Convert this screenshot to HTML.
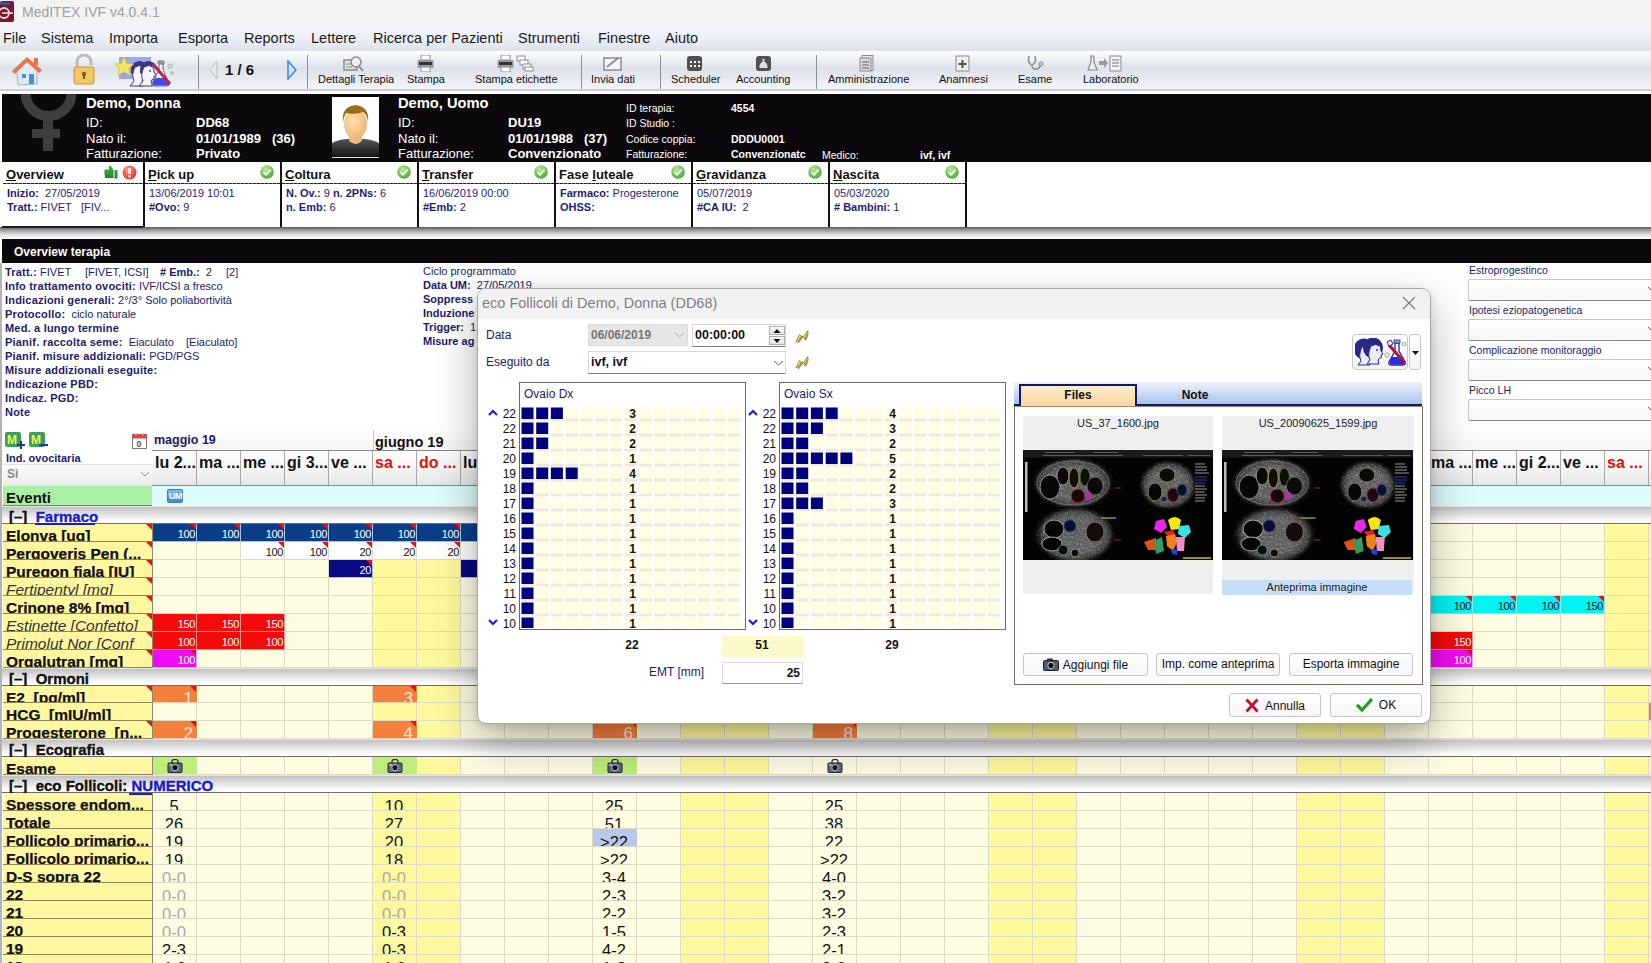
<!DOCTYPE html><html><head><meta charset="utf-8"><style>
html,body{margin:0;padding:0;width:1651px;height:963px;overflow:hidden;background:#fff;}
body{position:relative;font-family:"Liberation Sans",sans-serif;}
div{box-sizing:border-box;}
.t{position:absolute;white-space:nowrap;line-height:1;}
</style></head><body>
<div style="position:absolute;left:0px;top:0px;width:1651px;height:25px;background:#f3f3f3;"></div>
<svg style="position:absolute;left:0;top:1px" width="15" height="21" viewBox="0 0 15 21">
<path d="M0 2 Q0 0 2 0 L12 0 Q14 0 14 2 L14 19 Q14 21 12 21 L0 21 Z" fill="#7a1630"/>
<path d="M0 1 L10 1 L10 4 L0 4Z" fill="#3b5b9b" opacity=".8"/>
<circle cx="4" cy="12" r="5" fill="none" stroke="#f0d8dd" stroke-width="1.8"/>
<path d="M2 12 H13" stroke="#f0d8dd" stroke-width="1.6"/>
</svg>
<div style="position:absolute;left:22px;top:4px;white-space:nowrap;font-size:14px;color:#a0a0a0;line-height:17px;">MedITEX IVF v4.0.4.1</div>
<div style="position:absolute;left:0px;top:25px;width:1651px;height:26px;background:linear-gradient(#f5f7fb,#e9edf4 60%,#dde2ea);"></div>
<div style="position:absolute;left:3px;top:30px;white-space:nowrap;font-size:14.5px;color:#1b1b1b;line-height:17px;">File</div>
<div style="position:absolute;left:41px;top:30px;white-space:nowrap;font-size:14.5px;color:#1b1b1b;line-height:17px;">Sistema</div>
<div style="position:absolute;left:109px;top:30px;white-space:nowrap;font-size:14.5px;color:#1b1b1b;line-height:17px;">Importa</div>
<div style="position:absolute;left:178px;top:30px;white-space:nowrap;font-size:14.5px;color:#1b1b1b;line-height:17px;">Esporta</div>
<div style="position:absolute;left:244px;top:30px;white-space:nowrap;font-size:14.5px;color:#1b1b1b;line-height:17px;">Reports</div>
<div style="position:absolute;left:311px;top:30px;white-space:nowrap;font-size:14.5px;color:#1b1b1b;line-height:17px;">Lettere</div>
<div style="position:absolute;left:373px;top:30px;white-space:nowrap;font-size:14.5px;color:#1b1b1b;line-height:17px;">Ricerca per Pazienti</div>
<div style="position:absolute;left:518px;top:30px;white-space:nowrap;font-size:14.5px;color:#1b1b1b;line-height:17px;">Strumenti</div>
<div style="position:absolute;left:598px;top:30px;white-space:nowrap;font-size:14.5px;color:#1b1b1b;line-height:17px;">Finestre</div>
<div style="position:absolute;left:665px;top:30px;white-space:nowrap;font-size:14.5px;color:#1b1b1b;line-height:17px;">Aiuto</div>
<div style="position:absolute;left:0px;top:51px;width:1651px;height:40px;background:linear-gradient(#ffffff,#f4f6f9 12%,#dde2ea 45%,#e6e9ef 70%,#f3f5f8);border-bottom:2px solid #c9cdd5;"></div>
<div style="position:absolute;left:198px;top:55px;width:1px;height:34px;background:#8a8f98;"></div>
<div style="position:absolute;left:307px;top:55px;width:1px;height:34px;background:#8a8f98;"></div>
<div style="position:absolute;left:581px;top:55px;width:1px;height:34px;background:#8a8f98;"></div>
<div style="position:absolute;left:660px;top:55px;width:1px;height:34px;background:#8a8f98;"></div>
<div style="position:absolute;left:816px;top:55px;width:1px;height:34px;background:#8a8f98;"></div>
<svg style="position:absolute;left:10px;top:54px" width="34" height="34" viewBox="0 0 34 34">
<path d="M4 17 L17 5 L30 17 L27 17 L27 30 L8 31 L7 17Z" fill="#dfe9f5" stroke="#9fb4cc" stroke-width="1"/>
<path d="M2 17 L17 3 L32 16 L29 19 L17 8 L5 20Z" fill="#e8744a"/>
<rect x="24" y="4" width="4" height="7" fill="#e8744a"/>
<rect x="12" y="20" width="4" height="4" fill="#4c8fd6"/>
<rect x="19" y="20" width="5" height="10" fill="#4c8fd6"/>
</svg>
<svg style="position:absolute;left:73px;top:54px" width="22" height="31" viewBox="0 0 22 31">
<path d="M4 14 V8 A7 7 0 0 1 18 8 V11" fill="none" stroke="#bdbdbd" stroke-width="3"/>
<rect x="1" y="13" width="20" height="17" rx="2" fill="#f2c867" stroke="#c9953a"/>
<circle cx="11" cy="20" r="2.2" fill="#8a5a1a"/><rect x="10" y="20" width="2" height="5" fill="#8a5a1a"/>
</svg>
<svg style="position:absolute;left:114px;top:55px" width="60" height="32" viewBox="0 0 60 32">
<rect x="5" y="2" width="32" height="22" fill="#9ea8e0"/>
<g transform="translate(14,4) scale(1.0)"><path d="M3 14 Q2 3 11 2 Q18 2 18.5 9 Q14 5 8 8 Q5 10 5 15Z" fill="#3a3488"/>
<path d="M7 8 Q12 5 16 8 Q17 11 17 13 L19 16 L17 17 L17.5 19.5 L15 20.5 L14 22 L15.5 27 L2 27 L6 22 Q3 16 7 8Z" fill="#f4f4fa" stroke="#3a3488" stroke-width="1"/>
<circle cx="13" cy="12" r=".9" fill="#3a3488"/></g><g transform="translate(23,4) scale(1.0)"><path d="M3 14 Q2 3 11 2 Q18 2 18.5 9 Q14 5 8 8 Q5 10 5 15Z" fill="#3a3488"/>
<path d="M7 8 Q12 5 16 8 Q17 11 17 13 L19 16 L17 17 L17.5 19.5 L15 20.5 L14 22 L15.5 27 L2 27 L6 22 Q3 16 7 8Z" fill="#f4f4fa" stroke="#3a3488" stroke-width="1"/>
<circle cx="13" cy="12" r=".9" fill="#3a3488"/></g>
<path d="M10 2 L12.8 8.5 L19.8 9 L14.5 13.6 L16.2 20.5 L10 16.8 L3.8 20.5 L5.5 13.6 L0.2 9 L7.2 8.5Z" fill="#f2e660" stroke="#d8c038" stroke-width=".6"/>
<path d="M45 8 L45 15 L38 28 Q37 31 40 31 L53 31 Q56 31 55 28 L49 15 L49 8Z" fill="#fff" stroke="#5a5aa8" stroke-width="1"/>
<path d="M40 23 L52 23 L55 29 Q55 30.5 53 30.5 L40 30.5 Q38 30.5 38.5 29Z" fill="#4848e8"/>
<path d="M39 9 L56 29" stroke="#b82848" stroke-width="3.2"/>
<rect x="44" y="6" width="6" height="3" rx="1" fill="#aab" stroke="#667"/>
<circle cx="56" cy="11" r="2" fill="none" stroke="#8ab880" stroke-width=".9"/><circle cx="58" cy="18" r="1.3" fill="none" stroke="#8ab880" stroke-width=".9"/><circle cx="41" cy="22" r="1.6" fill="none" stroke="#8ab880" stroke-width=".9"/>
</svg>
<svg style="position:absolute;left:208px;top:60px" width="11" height="20" viewBox="0 0 11 20"><path d="M9 1 L2 10 L9 19 Z" fill="#e6e8ec" stroke="#b8bcc4"/></svg>
<div style="position:absolute;left:225px;top:62px;white-space:nowrap;font-size:15px;font-weight:bold;color:#111;line-height:16px;">1 / 6</div>
<svg style="position:absolute;left:286px;top:60px" width="12" height="20" viewBox="0 0 12 20"><path d="M2 1 L10 10 L2 19 Z" fill="#cfe3fb" stroke="#3d8ae0" stroke-width="1.5"/></svg>
<div style="position:absolute;left:318px;top:73px;white-space:nowrap;font-size:11px;color:#111;line-height:12px;">Dettagli Terapia</div>
<div style="position:absolute;left:407px;top:73px;white-space:nowrap;font-size:11px;color:#111;line-height:12px;">Stampa</div>
<div style="position:absolute;left:475px;top:73px;white-space:nowrap;font-size:11px;color:#111;line-height:12px;">Stampa etichette</div>
<div style="position:absolute;left:591px;top:73px;white-space:nowrap;font-size:11px;color:#111;line-height:12px;">Invia dati</div>
<div style="position:absolute;left:671px;top:73px;white-space:nowrap;font-size:11px;color:#111;line-height:12px;">Scheduler</div>
<div style="position:absolute;left:736px;top:73px;white-space:nowrap;font-size:11px;color:#111;line-height:12px;">Accounting</div>
<div style="position:absolute;left:828px;top:73px;white-space:nowrap;font-size:11px;color:#111;line-height:12px;">Amministrazione</div>
<div style="position:absolute;left:939px;top:73px;white-space:nowrap;font-size:11px;color:#111;line-height:12px;">Anamnesi</div>
<div style="position:absolute;left:1018px;top:73px;white-space:nowrap;font-size:11px;color:#111;line-height:12px;">Esame</div>
<div style="position:absolute;left:1083px;top:73px;white-space:nowrap;font-size:11px;color:#111;line-height:12px;">Laboratorio</div>
<svg style="position:absolute;left:343px;top:55px" width="22" height="17" viewBox="0 0 22 17"><rect x="1" y="5" width="13" height="10" fill="#e4e4e4" stroke="#8c8c8c" stroke-width="1.5"/><path d="M3 9h6M3 12h6" stroke="#8c8c8c"/><circle cx="13" cy="7" r="5" fill="#eee" stroke="#8c8c8c" stroke-width="1.5"/><path d="M16 11 L20 16" stroke="#8c8c8c" stroke-width="2"/></svg>
<svg style="position:absolute;left:417px;top:55px" width="17" height="17" viewBox="0 0 17 17"><rect x="4" y="0" width="9" height="5" fill="#fff" stroke="#8c8c8c"/><rect x="0.5" y="5" width="16" height="8" rx="1" fill="#9a9a9a"/><rect x="2" y="7" width="13" height="3" fill="#333"/><rect x="4" y="12" width="9" height="5" fill="#fff" stroke="#8c8c8c"/></svg>
<svg style="position:absolute;left:497px;top:55px" width="17" height="17" viewBox="0 0 17 17"><rect x="4" y="0" width="9" height="5" fill="#fff" stroke="#8c8c8c"/><rect x="0.5" y="5" width="16" height="8" rx="1" fill="#9a9a9a"/><rect x="2" y="7" width="13" height="3" fill="#333"/><rect x="4" y="12" width="9" height="5" fill="#fff" stroke="#8c8c8c"/></svg>
<svg style="position:absolute;left:516px;top:55px" width="18" height="17" viewBox="0 0 18 17"><rect x="1" y="1" width="8" height="5" fill="#fff" stroke="#8c8c8c"/><rect x="4" y="5" width="8" height="5" fill="#fff" stroke="#8c8c8c"/><rect x="7" y="9" width="8" height="5" fill="#fff" stroke="#8c8c8c"/><rect x="9" y="12" width="8" height="4" fill="#fff" stroke="#8c8c8c"/></svg>
<svg style="position:absolute;left:603px;top:55px" width="19" height="17" viewBox="0 0 19 17"><rect x="1" y="3" width="17" height="12" fill="#f4f4f4" stroke="#8c8c8c" stroke-width="1.5"/><path d="M4 12 L15 3" stroke="#8c8c8c" stroke-width="2"/></svg>
<svg style="position:absolute;left:686px;top:55px" width="17" height="17" viewBox="0 0 17 17"><rect x="1" y="1" width="15" height="15" rx="3" fill="#505050"/><g fill="#fff"><rect x="4" y="6" width="2" height="2"/><rect x="8" y="6" width="2" height="2"/><rect x="12" y="6" width="2" height="2"/><rect x="4" y="10" width="2" height="2"/><rect x="8" y="10" width="2" height="2"/><rect x="12" y="10" width="2" height="2"/></g></svg>
<svg style="position:absolute;left:755px;top:55px" width="17" height="17" viewBox="0 0 17 17"><rect x="1" y="1" width="15" height="15" rx="3" fill="#505050"/><path d="M7 4 L10 4 L9 6 Q13 9 12.5 13 L4.5 13 Q4 9 8 6Z" fill="#ddd"/></svg>
<svg style="position:absolute;left:859px;top:55px" width="16" height="17" viewBox="0 0 16 17"><rect x="3" y="0.5" width="11" height="15" fill="#e8e8e8" stroke="#8c8c8c"/><rect x="1" y="3" width="11" height="13" fill="#d8d8d8" stroke="#8c8c8c"/><path d="M3 7h7M3 10h7M3 13h7" stroke="#666"/></svg>
<svg style="position:absolute;left:955px;top:55px" width="15" height="17" viewBox="0 0 15 17"><rect x="1" y="1" width="13" height="15" fill="#eee" stroke="#8c8c8c"/><path d="M7.5 5v8M3.5 9h8" stroke="#555" stroke-width="2"/></svg>
<svg style="position:absolute;left:1026px;top:55px" width="18" height="17" viewBox="0 0 18 17"><path d="M3 1 Q1 8 6 10 Q11 8 9 1 M6 10 Q6 15 11 14 Q14 13 14 10" fill="none" stroke="#8c8c8c" stroke-width="1.6"/><circle cx="15" cy="9" r="2" fill="#ccc" stroke="#8c8c8c"/></svg>
<svg style="position:absolute;left:1087px;top:55px" width="35" height="17" viewBox="0 0 35 17"><path d="M3 1h4M4 1v6 L1 15 H10 L7 7 V1" fill="#eee" stroke="#8c8c8c" stroke-width="1.2"/><path d="M12 6h5V3l4 5-4 5v-3h-5z" fill="#9a9a9a"/><rect x="23" y="1" width="11" height="15" fill="#f4f4f4" stroke="#8c8c8c"/><path d="M25 5h7M25 8h7M25 11h7" stroke="#777"/></svg>
<div style="position:absolute;left:2px;top:94px;width:1649px;height:68px;background:#0c090c;"></div>
<svg style="position:absolute;left:2px;top:94px" width="90" height="60" viewBox="0 0 90 60">
<circle cx="46.5" cy="-1" r="23" fill="none" stroke="#3f3d3f" stroke-width="10"/>
<rect x="41" y="20" width="10" height="37" fill="#3f3d3f"/><rect x="30" y="35" width="28" height="9" fill="#3f3d3f"/>
</svg>
<div style="position:absolute;left:86px;top:96px;white-space:nowrap;font-size:14.7px;font-weight:bold;color:#fff;line-height:15px;">Demo, Donna</div>
<div style="position:absolute;left:86px;top:115.0px;white-space:nowrap;font-size:13px;color:#fff;line-height:15px;">ID:</div>
<div style="position:absolute;left:196px;top:115.0px;white-space:nowrap;font-size:13px;font-weight:bold;color:#fff;line-height:15px;">DD68</div>
<div style="position:absolute;left:86px;top:130.5px;white-space:nowrap;font-size:13px;color:#fff;line-height:15px;">Nato il:</div>
<div style="position:absolute;left:196px;top:130.5px;white-space:nowrap;font-size:13px;font-weight:bold;color:#fff;line-height:15px;">01/01/1989&nbsp;&nbsp; (36)</div>
<div style="position:absolute;left:86px;top:146.0px;white-space:nowrap;font-size:13px;color:#fff;line-height:15px;">Fatturazione:</div>
<div style="position:absolute;left:196px;top:146.0px;white-space:nowrap;font-size:13px;font-weight:bold;color:#fff;line-height:15px;">Privato</div>
<div style="position:absolute;left:332px;top:97px;width:47px;height:61px;background:#fff;overflow:hidden;border-bottom:1px solid #ddd">
<svg width="47" height="61" viewBox="0 0 47 61">
<defs><linearGradient id="sh" x1="0" y1="0" x2="0" y2="1"><stop offset="0" stop-color="#555"/><stop offset="1" stop-color="#111"/></linearGradient>
<radialGradient id="fc" cx=".4" cy=".4" r=".7"><stop offset="0" stop-color="#ffe0b0"/><stop offset="1" stop-color="#e9b070"/></radialGradient></defs>
<path d="M0 46 Q8 42 16 42 L31 42 Q39 42 47 46 L47 61 L0 61Z" fill="url(#sh)"/>
<path d="M17 36 L17 44 Q23.5 50 30 44 L30 36Z" fill="#eab878"/>
<ellipse cx="23.5" cy="27" rx="11.5" ry="15" fill="url(#fc)"/>
<path d="M11 25 Q9 10 23.5 8 Q38 10 36 25 Q35 17 31 15 Q24 18 14 16 Q12 19 11 25Z" fill="#9b6a1c"/>
</svg></div>
<div style="position:absolute;left:398px;top:96px;white-space:nowrap;font-size:14.7px;font-weight:bold;color:#fff;line-height:15px;">Demo, Uomo</div>
<div style="position:absolute;left:398px;top:115.0px;white-space:nowrap;font-size:13px;color:#fff;line-height:15px;">ID:</div>
<div style="position:absolute;left:508px;top:115.0px;white-space:nowrap;font-size:13px;font-weight:bold;color:#fff;line-height:15px;">DU19</div>
<div style="position:absolute;left:398px;top:130.5px;white-space:nowrap;font-size:13px;color:#fff;line-height:15px;">Nato il:</div>
<div style="position:absolute;left:508px;top:130.5px;white-space:nowrap;font-size:13px;font-weight:bold;color:#fff;line-height:15px;">01/01/1988&nbsp;&nbsp; (37)</div>
<div style="position:absolute;left:398px;top:146.0px;white-space:nowrap;font-size:13px;color:#fff;line-height:15px;">Fatturazione:</div>
<div style="position:absolute;left:508px;top:146.0px;white-space:nowrap;font-size:13px;font-weight:bold;color:#fff;line-height:15px;">Convenzionato</div>
<div style="position:absolute;left:626px;top:102px;white-space:nowrap;font-size:10.5px;line-height:12px;color:#fff;">ID terapia:</div>
<div style="position:absolute;left:731px;top:102px;white-space:nowrap;font-size:10.5px;line-height:12px;color:#fff;font-weight:bold;">4554</div>
<div style="position:absolute;left:626px;top:117px;white-space:nowrap;font-size:10.5px;line-height:12px;color:#fff;">ID Studio :</div>
<div style="position:absolute;left:731px;top:117px;white-space:nowrap;font-size:10.5px;line-height:12px;color:#fff;font-weight:bold;"></div>
<div style="position:absolute;left:626px;top:133px;white-space:nowrap;font-size:10.5px;line-height:12px;color:#fff;">Codice coppia:</div>
<div style="position:absolute;left:731px;top:133px;white-space:nowrap;font-size:10.5px;line-height:12px;color:#fff;font-weight:bold;">DDDU0001</div>
<div style="position:absolute;left:626px;top:148px;white-space:nowrap;font-size:10.5px;line-height:12px;color:#fff;">Fatturazione:</div>
<div style="position:absolute;left:731px;top:148px;white-space:nowrap;font-size:10.5px;line-height:12px;color:#fff;font-weight:bold;">Convenzionatc</div>
<div style="position:absolute;left:822px;top:148.5px;white-space:nowrap;font-size:10.5px;line-height:12px;color:#fff;">Medico:</div>
<div style="position:absolute;left:920px;top:148.5px;white-space:nowrap;font-size:10.5px;line-height:12px;color:#fff;font-weight:bold;">ivf, ivf</div>
<div style="position:absolute;left:0px;top:162px;width:1651px;height:65px;background:#fff;"></div>
<div style="position:absolute;left:0px;top:227px;width:1651px;height:12px;background:linear-gradient(#5a5a5a,#9a9a9a 25%,#dcdcdc 60%,#fff);"></div>
<div style="position:absolute;left:2px;top:226px;width:141px;height:2px;background:#1a2030;"></div>
<div style="position:absolute;left:3px;top:183px;width:140px;height:1px;background:repeating-linear-gradient(90deg,#222 0 3px,#888 3px 4px);"></div>
<div style="position:absolute;left:6px;top:168px;white-space:nowrap;font-size:13px;font-weight:bold;color:#111;line-height:13px;"><u>O</u>verview</div>
<div style="position:absolute;left:7px;top:187px;white-space:nowrap;font-size:11px;color:#1e1e78;line-height:12px;"><b>Inizio:</b>&nbsp; 27/05/2019</div>
<div style="position:absolute;left:7px;top:201px;white-space:nowrap;font-size:11px;color:#1e1e78;line-height:12px;"><b>Tratt.:</b> FIVET&nbsp;&nbsp; [FIV...</div>
<div style="position:absolute;left:143px;top:162px;width:2px;height:65px;background:#111;"></div>
<div style="position:absolute;left:145px;top:183px;width:136px;height:1px;background:repeating-linear-gradient(90deg,#222 0 3px,#888 3px 4px);"></div>
<div style="position:absolute;left:148px;top:168px;white-space:nowrap;font-size:13px;font-weight:bold;color:#111;line-height:13px;"><u>P</u>ick up</div>
<div style="position:absolute;left:260px;top:165px;width:14px;height:14px"><svg width="14" height="14" viewBox="0 0 14 14"><defs><radialGradient id="gk" cx=".4" cy=".3" r=".8"><stop offset="0" stop-color="#b8ee98"/><stop offset="1" stop-color="#3ea02a"/></radialGradient></defs><circle cx="7" cy="7" r="6.8" fill="url(#gk)"/><path d="M3.5 7.2 L6 9.6 L10.6 4.6" fill="none" stroke="#fff" stroke-width="1.8"/></svg></div>
<div style="position:absolute;left:149px;top:187px;white-space:nowrap;font-size:11px;color:#1e1e78;line-height:12px;">13/06/2019 10:01</div>
<div style="position:absolute;left:149px;top:201px;white-space:nowrap;font-size:11px;color:#1e1e78;line-height:12px;"><b>#Ovo:</b> 9</div>
<div style="position:absolute;left:280px;top:162px;width:2px;height:65px;background:#111;"></div>
<div style="position:absolute;left:282px;top:183px;width:136px;height:1px;background:repeating-linear-gradient(90deg,#222 0 3px,#888 3px 4px);"></div>
<div style="position:absolute;left:285px;top:168px;white-space:nowrap;font-size:13px;font-weight:bold;color:#111;line-height:13px;"><u>C</u>oltura</div>
<div style="position:absolute;left:397px;top:165px;width:14px;height:14px"><svg width="14" height="14" viewBox="0 0 14 14"><defs><radialGradient id="gk" cx=".4" cy=".3" r=".8"><stop offset="0" stop-color="#b8ee98"/><stop offset="1" stop-color="#3ea02a"/></radialGradient></defs><circle cx="7" cy="7" r="6.8" fill="url(#gk)"/><path d="M3.5 7.2 L6 9.6 L10.6 4.6" fill="none" stroke="#fff" stroke-width="1.8"/></svg></div>
<div style="position:absolute;left:286px;top:187px;white-space:nowrap;font-size:11px;color:#1e1e78;line-height:12px;"><b>N. Ov.:</b> 9 <b>n. 2PNs:</b> 6</div>
<div style="position:absolute;left:286px;top:201px;white-space:nowrap;font-size:11px;color:#1e1e78;line-height:12px;"><b>n. Emb:</b> 6</div>
<div style="position:absolute;left:417px;top:162px;width:2px;height:65px;background:#111;"></div>
<div style="position:absolute;left:419px;top:183px;width:136px;height:1px;background:repeating-linear-gradient(90deg,#222 0 3px,#888 3px 4px);"></div>
<div style="position:absolute;left:422px;top:168px;white-space:nowrap;font-size:13px;font-weight:bold;color:#111;line-height:13px;"><u>T</u>ransfer</div>
<div style="position:absolute;left:534px;top:165px;width:14px;height:14px"><svg width="14" height="14" viewBox="0 0 14 14"><defs><radialGradient id="gk" cx=".4" cy=".3" r=".8"><stop offset="0" stop-color="#b8ee98"/><stop offset="1" stop-color="#3ea02a"/></radialGradient></defs><circle cx="7" cy="7" r="6.8" fill="url(#gk)"/><path d="M3.5 7.2 L6 9.6 L10.6 4.6" fill="none" stroke="#fff" stroke-width="1.8"/></svg></div>
<div style="position:absolute;left:423px;top:187px;white-space:nowrap;font-size:11px;color:#1e1e78;line-height:12px;">16/06/2019 00:00</div>
<div style="position:absolute;left:423px;top:201px;white-space:nowrap;font-size:11px;color:#1e1e78;line-height:12px;"><b>#Emb:</b> 2</div>
<div style="position:absolute;left:554px;top:162px;width:2px;height:65px;background:#111;"></div>
<div style="position:absolute;left:556px;top:183px;width:136px;height:1px;background:repeating-linear-gradient(90deg,#222 0 3px,#888 3px 4px);"></div>
<div style="position:absolute;left:559px;top:168px;white-space:nowrap;font-size:13px;font-weight:bold;color:#111;line-height:13px;">Fase <u>l</u>uteale</div>
<div style="position:absolute;left:671px;top:165px;width:14px;height:14px"><svg width="14" height="14" viewBox="0 0 14 14"><defs><radialGradient id="gk" cx=".4" cy=".3" r=".8"><stop offset="0" stop-color="#b8ee98"/><stop offset="1" stop-color="#3ea02a"/></radialGradient></defs><circle cx="7" cy="7" r="6.8" fill="url(#gk)"/><path d="M3.5 7.2 L6 9.6 L10.6 4.6" fill="none" stroke="#fff" stroke-width="1.8"/></svg></div>
<div style="position:absolute;left:560px;top:187px;white-space:nowrap;font-size:11px;color:#1e1e78;line-height:12px;"><b>Farmaco:</b> Progesterone</div>
<div style="position:absolute;left:560px;top:201px;white-space:nowrap;font-size:11px;color:#1e1e78;line-height:12px;"><b>OHSS:</b></div>
<div style="position:absolute;left:691px;top:162px;width:2px;height:65px;background:#111;"></div>
<div style="position:absolute;left:693px;top:183px;width:136px;height:1px;background:repeating-linear-gradient(90deg,#222 0 3px,#888 3px 4px);"></div>
<div style="position:absolute;left:696px;top:168px;white-space:nowrap;font-size:13px;font-weight:bold;color:#111;line-height:13px;"><u>G</u>ravidanza</div>
<div style="position:absolute;left:808px;top:165px;width:14px;height:14px"><svg width="14" height="14" viewBox="0 0 14 14"><defs><radialGradient id="gk" cx=".4" cy=".3" r=".8"><stop offset="0" stop-color="#b8ee98"/><stop offset="1" stop-color="#3ea02a"/></radialGradient></defs><circle cx="7" cy="7" r="6.8" fill="url(#gk)"/><path d="M3.5 7.2 L6 9.6 L10.6 4.6" fill="none" stroke="#fff" stroke-width="1.8"/></svg></div>
<div style="position:absolute;left:697px;top:187px;white-space:nowrap;font-size:11px;color:#1e1e78;line-height:12px;">05/07/2019</div>
<div style="position:absolute;left:697px;top:201px;white-space:nowrap;font-size:11px;color:#1e1e78;line-height:12px;"><b>#CA IU:</b>&nbsp; 2</div>
<div style="position:absolute;left:828px;top:162px;width:2px;height:65px;background:#111;"></div>
<div style="position:absolute;left:830px;top:183px;width:136px;height:1px;background:repeating-linear-gradient(90deg,#222 0 3px,#888 3px 4px);"></div>
<div style="position:absolute;left:833px;top:168px;white-space:nowrap;font-size:13px;font-weight:bold;color:#111;line-height:13px;"><u>N</u>ascita</div>
<div style="position:absolute;left:945px;top:165px;width:14px;height:14px"><svg width="14" height="14" viewBox="0 0 14 14"><defs><radialGradient id="gk" cx=".4" cy=".3" r=".8"><stop offset="0" stop-color="#b8ee98"/><stop offset="1" stop-color="#3ea02a"/></radialGradient></defs><circle cx="7" cy="7" r="6.8" fill="url(#gk)"/><path d="M3.5 7.2 L6 9.6 L10.6 4.6" fill="none" stroke="#fff" stroke-width="1.8"/></svg></div>
<div style="position:absolute;left:834px;top:187px;white-space:nowrap;font-size:11px;color:#1e1e78;line-height:12px;">05/03/2020</div>
<div style="position:absolute;left:834px;top:201px;white-space:nowrap;font-size:11px;color:#1e1e78;line-height:12px;"><b># Bambini:</b> 1</div>
<div style="position:absolute;left:965px;top:162px;width:2px;height:65px;background:#111;"></div>
<svg style="position:absolute;left:104px;top:165px" width="14" height="14" viewBox="0 0 14 14"><defs><linearGradient id="th" x1="0" y1="0" x2="0" y2="1"><stop offset="0" stop-color="#3cb83c"/><stop offset="1" stop-color="#2a7a3a"/></linearGradient></defs><path d="M10.5 5h3v8.5h-3z M9.5 5 L6.5 0.5 Q4.5 0.5 5 4.5 H0.5 Q0 8 1 12.5 Q2 13.5 4 13 H9.5Z" fill="url(#th)"/></svg>
<svg style="position:absolute;left:122px;top:165px" width="15" height="15" viewBox="0 0 15 15"><defs><radialGradient id="rk" cx=".4" cy=".3" r=".8"><stop offset="0" stop-color="#ff9a8a"/><stop offset="1" stop-color="#d02a1a"/></radialGradient></defs><circle cx="7.5" cy="7.5" r="7" fill="url(#rk)"/><rect x="6.3" y="3" width="2.4" height="6" fill="#fff"/><rect x="6.3" y="10.2" width="2.4" height="2.2" fill="#fff"/></svg>
<div style="position:absolute;left:2px;top:239px;width:1649px;height:24px;background:#0c090c;"></div>
<div style="position:absolute;left:14px;top:246px;white-space:nowrap;font-size:12px;color:#fff;line-height:13px;font-weight:bold;">Overview terapia</div>
<div style="position:absolute;left:0px;top:263px;width:1651px;height:167px;background:#fff;"></div>
<div style="position:absolute;left:0px;top:263px;width:2px;height:700px;background:#b0b0b0;"></div>
<style>.ib b{letter-spacing:0.2px}</style>
<div class="ib" style="position:absolute;left:5px;top:266px;white-space:nowrap;font-size:11px;line-height:12px;color:#1c1c6a;"><b>Tratt.:</b> FIVET</div>
<div class="ib" style="position:absolute;left:5px;top:280px;white-space:nowrap;font-size:11px;line-height:12px;color:#1c1c6a;"><b>Info trattamento ovociti:</b> IVF/ICSI a fresco</div>
<div class="ib" style="position:absolute;left:5px;top:294px;white-space:nowrap;font-size:11px;line-height:12px;color:#1c1c6a;"><b>Indicazioni generali:</b> 2°/3° Solo poliabortività</div>
<div class="ib" style="position:absolute;left:5px;top:308px;white-space:nowrap;font-size:11px;line-height:12px;color:#1c1c6a;"><b>Protocollo:</b>&nbsp; ciclo naturale</div>
<div class="ib" style="position:absolute;left:5px;top:322px;white-space:nowrap;font-size:11px;line-height:12px;color:#1c1c6a;"><b>Med. a lungo termine</b></div>
<div class="ib" style="position:absolute;left:5px;top:336px;white-space:nowrap;font-size:11px;line-height:12px;color:#1c1c6a;"><b>Pianif. raccolta seme:</b>&nbsp; Eiaculato</div>
<div class="ib" style="position:absolute;left:5px;top:350px;white-space:nowrap;font-size:11px;line-height:12px;color:#1c1c6a;"><b>Pianif. misure addizionali:</b> PGD/PGS</div>
<div class="ib" style="position:absolute;left:5px;top:364px;white-space:nowrap;font-size:11px;line-height:12px;color:#1c1c6a;"><b>Misure addizionali eseguite:</b></div>
<div class="ib" style="position:absolute;left:5px;top:378px;white-space:nowrap;font-size:11px;line-height:12px;color:#1c1c6a;"><b>Indicazione PBD:</b></div>
<div class="ib" style="position:absolute;left:5px;top:392px;white-space:nowrap;font-size:11px;line-height:12px;color:#1c1c6a;"><b>Indicaz. PGD:</b></div>
<div class="ib" style="position:absolute;left:5px;top:406px;white-space:nowrap;font-size:11px;line-height:12px;color:#1c1c6a;"><b>Note</b></div>
<div style="position:absolute;left:85px;top:266px;white-space:nowrap;font-size:11px;line-height:12px;color:#1c1c6a;">[FIVET, ICSI]</div>
<div style="position:absolute;left:160px;top:266px;white-space:nowrap;font-size:11px;line-height:12px;color:#1c1c6a;"><b># Emb.:</b>&nbsp; 2</div>
<div style="position:absolute;left:226px;top:266px;white-space:nowrap;font-size:11px;line-height:12px;color:#1c1c6a;">[2]</div>
<div style="position:absolute;left:186px;top:336px;white-space:nowrap;font-size:11px;line-height:12px;color:#1c1c6a;">[Eiaculato]</div>
<div style="position:absolute;left:423px;top:265px;white-space:nowrap;font-size:11px;line-height:12px;color:#1c1c6a;">Ciclo programmato</div>
<div style="position:absolute;left:423px;top:279px;white-space:nowrap;font-size:11px;line-height:12px;color:#1c1c6a;"><b>Data UM:</b>&nbsp; 27/05/2019</div>
<div style="position:absolute;left:423px;top:293px;white-space:nowrap;font-size:11px;line-height:12px;color:#1c1c6a;"><b>Soppress</b></div>
<div style="position:absolute;left:423px;top:307px;white-space:nowrap;font-size:11px;line-height:12px;color:#1c1c6a;"><b>Induzione</b></div>
<div style="position:absolute;left:423px;top:321px;white-space:nowrap;font-size:11px;line-height:12px;color:#1c1c6a;"><b>Trigger:</b>&nbsp; 1</div>
<div style="position:absolute;left:423px;top:335px;white-space:nowrap;font-size:11px;line-height:12px;color:#1c1c6a;"><b>Misure ag</b></div>
<div style="position:absolute;left:1469px;top:265px;white-space:nowrap;font-size:10.5px;line-height:11px;color:#1c1c6a;">Estroprogestinco</div>
<div style="position:absolute;left:1468px;top:279px;width:190px;height:22px;background:linear-gradient(#fff,#f7f7f7);border:1px solid #c8c8c8;border-bottom:1px solid #8a8a8a;border-radius:2px;"></div>
<svg style="position:absolute;left:1647px;top:286px" width="9" height="6" viewBox="0 0 9 6"><path d="M1 1 L4.5 4.5 L8 1" fill="none" stroke="#555" stroke-width="1"/></svg>
<div style="position:absolute;left:1469px;top:305px;white-space:nowrap;font-size:10.5px;line-height:11px;color:#1c1c6a;">Ipotesi eziopatogenetica</div>
<div style="position:absolute;left:1468px;top:319px;width:190px;height:22px;background:linear-gradient(#fff,#f7f7f7);border:1px solid #c8c8c8;border-bottom:1px solid #8a8a8a;border-radius:2px;"></div>
<svg style="position:absolute;left:1647px;top:326px" width="9" height="6" viewBox="0 0 9 6"><path d="M1 1 L4.5 4.5 L8 1" fill="none" stroke="#555" stroke-width="1"/></svg>
<div style="position:absolute;left:1469px;top:345px;white-space:nowrap;font-size:10.5px;line-height:11px;color:#1c1c6a;">Complicazione monitoraggio</div>
<div style="position:absolute;left:1468px;top:359px;width:190px;height:22px;background:linear-gradient(#fff,#f7f7f7);border:1px solid #c8c8c8;border-bottom:1px solid #8a8a8a;border-radius:2px;"></div>
<svg style="position:absolute;left:1647px;top:366px" width="9" height="6" viewBox="0 0 9 6"><path d="M1 1 L4.5 4.5 L8 1" fill="none" stroke="#555" stroke-width="1"/></svg>
<div style="position:absolute;left:1469px;top:385px;white-space:nowrap;font-size:10.5px;line-height:11px;color:#1c1c6a;">Picco LH</div>
<div style="position:absolute;left:1468px;top:399px;width:190px;height:22px;background:linear-gradient(#fff,#f7f7f7);border:1px solid #c8c8c8;border-bottom:1px solid #8a8a8a;border-radius:2px;"></div>
<svg style="position:absolute;left:1647px;top:406px" width="9" height="6" viewBox="0 0 9 6"><path d="M1 1 L4.5 4.5 L8 1" fill="none" stroke="#555" stroke-width="1"/></svg>
<div style="position:absolute;left:1440px;top:425px;width:211px;height:25px;background:linear-gradient(#fff,#f0f0f0);"></div>
<style>.cn,.cw{position:absolute;width:44px;border-right:1px solid #dcdcc4;border-bottom:1px solid #dcdcc4;background:#fefde2}.cw{background:#fff99e}</style>
<div style="position:absolute;left:0px;top:428px;width:1651px;height:23px;background:#fff;"></div>
<div style="position:absolute;left:152px;top:428px;width:1499px;height:23px;background:linear-gradient(#fff,#f4f4f4);"></div>
<svg style="position:absolute;left:5px;top:432px" width="20" height="18" viewBox="0 0 20 18"><rect x="0" y="0" width="16" height="15" rx="2" fill="#3aa05a"/><text x="2" y="12" font-family="Liberation Sans" font-weight="bold" font-size="12" fill="#f5f050">M</text><path d="M12 13h8M16 9v8" stroke="#1a3aa0" stroke-width="2.2"/></svg>
<svg style="position:absolute;left:29px;top:432px" width="20" height="18" viewBox="0 0 20 18"><rect x="0" y="0" width="16" height="15" rx="2" fill="#3aa05a"/><text x="2" y="12" font-family="Liberation Sans" font-weight="bold" font-size="12" fill="#f5f050">M</text><path d="M10 13h9" stroke="#1a3aa0" stroke-width="2.2"/></svg>
<svg style="position:absolute;left:132px;top:433px" width="15" height="16" viewBox="0 0 15 16"><rect x="0.5" y="1.5" width="14" height="14" fill="#fff" stroke="#777"/><rect x="0.5" y="1.5" width="14" height="4" fill="#e84040"/><circle cx="4" cy="2" r="1.2" fill="#fff" stroke="#a00" stroke-width=".6"/><circle cx="11" cy="2" r="1.2" fill="#fff" stroke="#a00" stroke-width=".6"/><text x="4.5" y="14" font-family="Liberation Sans" font-weight="bold" font-size="9" fill="#555">0</text></svg>
<div style="position:absolute;left:154px;top:434px;white-space:nowrap;font-size:12.5px;font-weight:bold;line-height:13px;color:#1c1c6a;">maggio 19</div>
<div style="position:absolute;left:373px;top:430px;width:1px;height:21px;background:#c8c8c8;"></div>
<div style="position:absolute;left:375px;top:435px;white-space:nowrap;font-size:14.5px;font-weight:bold;line-height:15px;color:#111;">giugno 19</div>
<div style="position:absolute;left:6px;top:452px;white-space:nowrap;font-size:11px;font-weight:bold;line-height:12px;color:#1c1c6a;">Ind. ovocitaria</div>
<div style="position:absolute;left:3px;top:464px;width:149px;height:22px;background:linear-gradient(#fafafa,#ececec);border-top:1px solid #e0e0e0;"></div>
<div style="position:absolute;left:7px;top:468px;white-space:nowrap;font-size:12px;font-weight:bold;line-height:13px;color:#888;">Si</div>
<svg style="position:absolute;left:140px;top:471px" width="10" height="6" viewBox="0 0 10 6"><path d="M1 1 L5 5 L9 1" fill="none" stroke="#999" stroke-width="1"/></svg>
<div style="position:absolute;left:152px;top:450px;width:1499px;height:36px;background:linear-gradient(#fff,#f2f2f2 60%,#e6e6e6);border-top:1px solid #8a8a8a;border-bottom:1px solid #8a8a8a;"></div>
<div style="position:absolute;left:196px;top:451px;width:1px;height:34px;background:#a8a8a8;"></div>
<div style="position:absolute;left:155px;top:455px;width:41px;height:16px;overflow:hidden;white-space:nowrap;font-size:16px;font-weight:bold;line-height:16px;color:#111;">lu 2...</div>
<div style="position:absolute;left:240px;top:451px;width:1px;height:34px;background:#a8a8a8;"></div>
<div style="position:absolute;left:199px;top:455px;width:41px;height:16px;overflow:hidden;white-space:nowrap;font-size:16px;font-weight:bold;line-height:16px;color:#111;">ma ...</div>
<div style="position:absolute;left:284px;top:451px;width:1px;height:34px;background:#a8a8a8;"></div>
<div style="position:absolute;left:243px;top:455px;width:41px;height:16px;overflow:hidden;white-space:nowrap;font-size:16px;font-weight:bold;line-height:16px;color:#111;">me ...</div>
<div style="position:absolute;left:328px;top:451px;width:1px;height:34px;background:#a8a8a8;"></div>
<div style="position:absolute;left:287px;top:455px;width:41px;height:16px;overflow:hidden;white-space:nowrap;font-size:16px;font-weight:bold;line-height:16px;color:#111;">gi 3...</div>
<div style="position:absolute;left:372px;top:451px;width:1px;height:34px;background:#a8a8a8;"></div>
<div style="position:absolute;left:331px;top:455px;width:41px;height:16px;overflow:hidden;white-space:nowrap;font-size:16px;font-weight:bold;line-height:16px;color:#111;">ve ...</div>
<div style="position:absolute;left:416px;top:451px;width:1px;height:34px;background:#a8a8a8;"></div>
<div style="position:absolute;left:375px;top:455px;width:41px;height:16px;overflow:hidden;white-space:nowrap;font-size:16px;font-weight:bold;line-height:16px;color:#e01010;">sa ...</div>
<div style="position:absolute;left:460px;top:451px;width:1px;height:34px;background:#a8a8a8;"></div>
<div style="position:absolute;left:419px;top:455px;width:41px;height:16px;overflow:hidden;white-space:nowrap;font-size:16px;font-weight:bold;line-height:16px;color:#e01010;">do ...</div>
<div style="position:absolute;left:504px;top:451px;width:1px;height:34px;background:#a8a8a8;"></div>
<div style="position:absolute;left:463px;top:455px;width:41px;height:16px;overflow:hidden;white-space:nowrap;font-size:16px;font-weight:bold;line-height:16px;color:#111;">lu</div>
<div style="position:absolute;left:548px;top:451px;width:1px;height:34px;background:#a8a8a8;"></div>
<div style="position:absolute;left:592px;top:451px;width:1px;height:34px;background:#a8a8a8;"></div>
<div style="position:absolute;left:636px;top:451px;width:1px;height:34px;background:#a8a8a8;"></div>
<div style="position:absolute;left:680px;top:451px;width:1px;height:34px;background:#a8a8a8;"></div>
<div style="position:absolute;left:724px;top:451px;width:1px;height:34px;background:#a8a8a8;"></div>
<div style="position:absolute;left:768px;top:451px;width:1px;height:34px;background:#a8a8a8;"></div>
<div style="position:absolute;left:812px;top:451px;width:1px;height:34px;background:#a8a8a8;"></div>
<div style="position:absolute;left:856px;top:451px;width:1px;height:34px;background:#a8a8a8;"></div>
<div style="position:absolute;left:900px;top:451px;width:1px;height:34px;background:#a8a8a8;"></div>
<div style="position:absolute;left:944px;top:451px;width:1px;height:34px;background:#a8a8a8;"></div>
<div style="position:absolute;left:988px;top:451px;width:1px;height:34px;background:#a8a8a8;"></div>
<div style="position:absolute;left:1032px;top:451px;width:1px;height:34px;background:#a8a8a8;"></div>
<div style="position:absolute;left:1076px;top:451px;width:1px;height:34px;background:#a8a8a8;"></div>
<div style="position:absolute;left:1120px;top:451px;width:1px;height:34px;background:#a8a8a8;"></div>
<div style="position:absolute;left:1164px;top:451px;width:1px;height:34px;background:#a8a8a8;"></div>
<div style="position:absolute;left:1208px;top:451px;width:1px;height:34px;background:#a8a8a8;"></div>
<div style="position:absolute;left:1252px;top:451px;width:1px;height:34px;background:#a8a8a8;"></div>
<div style="position:absolute;left:1296px;top:451px;width:1px;height:34px;background:#a8a8a8;"></div>
<div style="position:absolute;left:1340px;top:451px;width:1px;height:34px;background:#a8a8a8;"></div>
<div style="position:absolute;left:1384px;top:451px;width:1px;height:34px;background:#a8a8a8;"></div>
<div style="position:absolute;left:1428px;top:451px;width:1px;height:34px;background:#a8a8a8;"></div>
<div style="position:absolute;left:1472px;top:451px;width:1px;height:34px;background:#a8a8a8;"></div>
<div style="position:absolute;left:1431px;top:455px;width:41px;height:16px;overflow:hidden;white-space:nowrap;font-size:16px;font-weight:bold;line-height:16px;color:#111;">ma ...</div>
<div style="position:absolute;left:1516px;top:451px;width:1px;height:34px;background:#a8a8a8;"></div>
<div style="position:absolute;left:1475px;top:455px;width:41px;height:16px;overflow:hidden;white-space:nowrap;font-size:16px;font-weight:bold;line-height:16px;color:#111;">me ...</div>
<div style="position:absolute;left:1560px;top:451px;width:1px;height:34px;background:#a8a8a8;"></div>
<div style="position:absolute;left:1519px;top:455px;width:41px;height:16px;overflow:hidden;white-space:nowrap;font-size:16px;font-weight:bold;line-height:16px;color:#111;">gi 2...</div>
<div style="position:absolute;left:1604px;top:451px;width:1px;height:34px;background:#a8a8a8;"></div>
<div style="position:absolute;left:1563px;top:455px;width:41px;height:16px;overflow:hidden;white-space:nowrap;font-size:16px;font-weight:bold;line-height:16px;color:#111;">ve ...</div>
<div style="position:absolute;left:1648px;top:451px;width:1px;height:34px;background:#a8a8a8;"></div>
<div style="position:absolute;left:1607px;top:455px;width:41px;height:16px;overflow:hidden;white-space:nowrap;font-size:16px;font-weight:bold;line-height:16px;color:#e01010;">sa ...</div>
<div style="position:absolute;left:1692px;top:451px;width:1px;height:34px;background:#a8a8a8;"></div>
<div style="position:absolute;left:3px;top:486px;width:149px;height:20px;background:#a9f0a5;border-bottom:1px solid #6a8a6a;"></div>
<div style="position:absolute;left:6px;top:490px;white-space:nowrap;font-size:15px;font-weight:bold;line-height:15px;color:#111;">Eventi</div>
<div style="position:absolute;left:152px;top:486px;width:1499px;height:20px;background:linear-gradient(#dbfcfc,#e2fbfb);"></div>
<div style="position:absolute;left:167px;top:489px;width:16px;height:14px;background:linear-gradient(#7fbdf0,#3d8ad8);border-radius:2px;border:1px solid #3a78c0;"></div>
<div style="position:absolute;left:169px;top:492px;white-space:nowrap;font-size:9px;font-weight:bold;line-height:9px;color:#fff;letter-spacing:-0.5px;">UM</div>
<div style="position:absolute;left:0px;top:506px;width:1651px;height:18px;background:linear-gradient(#fafafa 0,#c4c4c4 8%,#d8d8d8 35%,#fcfcfc 85%,#fff);border-bottom:1px solid #6e6e6e;"></div>
<div style="position:absolute;left:9px;top:509px;white-space:nowrap;font-size:15px;font-weight:bold;line-height:15px;color:#111;-webkit-text-stroke:0.35px currentColor;">[–]&nbsp; <span style="color:#1a1ad0;">Farmaco</span></div>
<div style="position:absolute;left:3px;top:524px;width:150px;height:18px;background:#fff7a0;border-bottom:1px solid #8c8658;border-right:1px solid #8a8a70;"></div>
<div style="position:absolute;left:6px;top:524px;width:144px;height:17px;overflow:hidden;white-space:nowrap;font-size:15.5px;line-height:15px;padding-top:4px;font-weight:bold;color:#111;-webkit-text-stroke:0.25px #111;">Elonva [ug]</div>
<div class="cn" style="left:153px;top:524px;height:18px"></div>
<div class="cn" style="left:197px;top:524px;height:18px"></div>
<div class="cn" style="left:241px;top:524px;height:18px"></div>
<div class="cn" style="left:285px;top:524px;height:18px"></div>
<div class="cn" style="left:329px;top:524px;height:18px"></div>
<div class="cw" style="left:373px;top:524px;height:18px"></div>
<div class="cw" style="left:417px;top:524px;height:18px"></div>
<div class="cn" style="left:461px;top:524px;height:18px"></div>
<div class="cn" style="left:505px;top:524px;height:18px"></div>
<div class="cn" style="left:549px;top:524px;height:18px"></div>
<div class="cn" style="left:593px;top:524px;height:18px"></div>
<div class="cn" style="left:637px;top:524px;height:18px"></div>
<div class="cw" style="left:681px;top:524px;height:18px"></div>
<div class="cw" style="left:725px;top:524px;height:18px"></div>
<div class="cn" style="left:769px;top:524px;height:18px"></div>
<div class="cn" style="left:813px;top:524px;height:18px"></div>
<div class="cn" style="left:857px;top:524px;height:18px"></div>
<div class="cn" style="left:901px;top:524px;height:18px"></div>
<div class="cn" style="left:945px;top:524px;height:18px"></div>
<div class="cw" style="left:989px;top:524px;height:18px"></div>
<div class="cw" style="left:1033px;top:524px;height:18px"></div>
<div class="cn" style="left:1077px;top:524px;height:18px"></div>
<div class="cn" style="left:1121px;top:524px;height:18px"></div>
<div class="cn" style="left:1165px;top:524px;height:18px"></div>
<div class="cn" style="left:1209px;top:524px;height:18px"></div>
<div class="cn" style="left:1253px;top:524px;height:18px"></div>
<div class="cw" style="left:1297px;top:524px;height:18px"></div>
<div class="cw" style="left:1341px;top:524px;height:18px"></div>
<div class="cn" style="left:1385px;top:524px;height:18px"></div>
<div class="cn" style="left:1429px;top:524px;height:18px"></div>
<div class="cn" style="left:1473px;top:524px;height:18px"></div>
<div class="cn" style="left:1517px;top:524px;height:18px"></div>
<div class="cn" style="left:1561px;top:524px;height:18px"></div>
<div class="cw" style="left:1605px;top:524px;height:18px"></div>
<div class="cw" style="left:1649px;top:524px;height:18px"></div>
<div style="position:absolute;left:3px;top:542px;width:150px;height:18px;background:#fff7a0;border-bottom:1px solid #8c8658;border-right:1px solid #8a8a70;"></div>
<div style="position:absolute;left:6px;top:542px;width:144px;height:17px;overflow:hidden;white-space:nowrap;font-size:15.5px;line-height:15px;padding-top:4px;font-weight:bold;color:#111;-webkit-text-stroke:0.25px #111;">Pergoveris Pen (...</div>
<div class="cn" style="left:153px;top:542px;height:18px"></div>
<div class="cn" style="left:197px;top:542px;height:18px"></div>
<div class="cn" style="left:241px;top:542px;height:18px"></div>
<div class="cn" style="left:285px;top:542px;height:18px"></div>
<div class="cn" style="left:329px;top:542px;height:18px"></div>
<div class="cw" style="left:373px;top:542px;height:18px"></div>
<div class="cw" style="left:417px;top:542px;height:18px"></div>
<div class="cn" style="left:461px;top:542px;height:18px"></div>
<div class="cn" style="left:505px;top:542px;height:18px"></div>
<div class="cn" style="left:549px;top:542px;height:18px"></div>
<div class="cn" style="left:593px;top:542px;height:18px"></div>
<div class="cn" style="left:637px;top:542px;height:18px"></div>
<div class="cw" style="left:681px;top:542px;height:18px"></div>
<div class="cw" style="left:725px;top:542px;height:18px"></div>
<div class="cn" style="left:769px;top:542px;height:18px"></div>
<div class="cn" style="left:813px;top:542px;height:18px"></div>
<div class="cn" style="left:857px;top:542px;height:18px"></div>
<div class="cn" style="left:901px;top:542px;height:18px"></div>
<div class="cn" style="left:945px;top:542px;height:18px"></div>
<div class="cw" style="left:989px;top:542px;height:18px"></div>
<div class="cw" style="left:1033px;top:542px;height:18px"></div>
<div class="cn" style="left:1077px;top:542px;height:18px"></div>
<div class="cn" style="left:1121px;top:542px;height:18px"></div>
<div class="cn" style="left:1165px;top:542px;height:18px"></div>
<div class="cn" style="left:1209px;top:542px;height:18px"></div>
<div class="cn" style="left:1253px;top:542px;height:18px"></div>
<div class="cw" style="left:1297px;top:542px;height:18px"></div>
<div class="cw" style="left:1341px;top:542px;height:18px"></div>
<div class="cn" style="left:1385px;top:542px;height:18px"></div>
<div class="cn" style="left:1429px;top:542px;height:18px"></div>
<div class="cn" style="left:1473px;top:542px;height:18px"></div>
<div class="cn" style="left:1517px;top:542px;height:18px"></div>
<div class="cn" style="left:1561px;top:542px;height:18px"></div>
<div class="cw" style="left:1605px;top:542px;height:18px"></div>
<div class="cw" style="left:1649px;top:542px;height:18px"></div>
<div style="position:absolute;left:3px;top:560px;width:150px;height:18px;background:#fff7a0;border-bottom:1px solid #8c8658;border-right:1px solid #8a8a70;"></div>
<div style="position:absolute;left:6px;top:560px;width:144px;height:17px;overflow:hidden;white-space:nowrap;font-size:15.5px;line-height:15px;padding-top:4px;font-weight:bold;color:#111;-webkit-text-stroke:0.25px #111;">Puregon fiala [IU]</div>
<div class="cn" style="left:153px;top:560px;height:18px"></div>
<div class="cn" style="left:197px;top:560px;height:18px"></div>
<div class="cn" style="left:241px;top:560px;height:18px"></div>
<div class="cn" style="left:285px;top:560px;height:18px"></div>
<div class="cn" style="left:329px;top:560px;height:18px"></div>
<div class="cw" style="left:373px;top:560px;height:18px"></div>
<div class="cw" style="left:417px;top:560px;height:18px"></div>
<div class="cn" style="left:461px;top:560px;height:18px"></div>
<div class="cn" style="left:505px;top:560px;height:18px"></div>
<div class="cn" style="left:549px;top:560px;height:18px"></div>
<div class="cn" style="left:593px;top:560px;height:18px"></div>
<div class="cn" style="left:637px;top:560px;height:18px"></div>
<div class="cw" style="left:681px;top:560px;height:18px"></div>
<div class="cw" style="left:725px;top:560px;height:18px"></div>
<div class="cn" style="left:769px;top:560px;height:18px"></div>
<div class="cn" style="left:813px;top:560px;height:18px"></div>
<div class="cn" style="left:857px;top:560px;height:18px"></div>
<div class="cn" style="left:901px;top:560px;height:18px"></div>
<div class="cn" style="left:945px;top:560px;height:18px"></div>
<div class="cw" style="left:989px;top:560px;height:18px"></div>
<div class="cw" style="left:1033px;top:560px;height:18px"></div>
<div class="cn" style="left:1077px;top:560px;height:18px"></div>
<div class="cn" style="left:1121px;top:560px;height:18px"></div>
<div class="cn" style="left:1165px;top:560px;height:18px"></div>
<div class="cn" style="left:1209px;top:560px;height:18px"></div>
<div class="cn" style="left:1253px;top:560px;height:18px"></div>
<div class="cw" style="left:1297px;top:560px;height:18px"></div>
<div class="cw" style="left:1341px;top:560px;height:18px"></div>
<div class="cn" style="left:1385px;top:560px;height:18px"></div>
<div class="cn" style="left:1429px;top:560px;height:18px"></div>
<div class="cn" style="left:1473px;top:560px;height:18px"></div>
<div class="cn" style="left:1517px;top:560px;height:18px"></div>
<div class="cn" style="left:1561px;top:560px;height:18px"></div>
<div class="cw" style="left:1605px;top:560px;height:18px"></div>
<div class="cw" style="left:1649px;top:560px;height:18px"></div>
<div style="position:absolute;left:3px;top:578px;width:150px;height:18px;background:#fff7a0;border-bottom:1px solid #8c8658;border-right:1px solid #8a8a70;"></div>
<div style="position:absolute;left:6px;top:578px;width:144px;height:17px;overflow:hidden;white-space:nowrap;font-size:15.5px;line-height:15px;padding-top:4px;font-style:italic;color:#333;">Fertipentyl [mg]</div>
<div class="cn" style="left:153px;top:578px;height:18px"></div>
<div class="cn" style="left:197px;top:578px;height:18px"></div>
<div class="cn" style="left:241px;top:578px;height:18px"></div>
<div class="cn" style="left:285px;top:578px;height:18px"></div>
<div class="cn" style="left:329px;top:578px;height:18px"></div>
<div class="cw" style="left:373px;top:578px;height:18px"></div>
<div class="cw" style="left:417px;top:578px;height:18px"></div>
<div class="cn" style="left:461px;top:578px;height:18px"></div>
<div class="cn" style="left:505px;top:578px;height:18px"></div>
<div class="cn" style="left:549px;top:578px;height:18px"></div>
<div class="cn" style="left:593px;top:578px;height:18px"></div>
<div class="cn" style="left:637px;top:578px;height:18px"></div>
<div class="cw" style="left:681px;top:578px;height:18px"></div>
<div class="cw" style="left:725px;top:578px;height:18px"></div>
<div class="cn" style="left:769px;top:578px;height:18px"></div>
<div class="cn" style="left:813px;top:578px;height:18px"></div>
<div class="cn" style="left:857px;top:578px;height:18px"></div>
<div class="cn" style="left:901px;top:578px;height:18px"></div>
<div class="cn" style="left:945px;top:578px;height:18px"></div>
<div class="cw" style="left:989px;top:578px;height:18px"></div>
<div class="cw" style="left:1033px;top:578px;height:18px"></div>
<div class="cn" style="left:1077px;top:578px;height:18px"></div>
<div class="cn" style="left:1121px;top:578px;height:18px"></div>
<div class="cn" style="left:1165px;top:578px;height:18px"></div>
<div class="cn" style="left:1209px;top:578px;height:18px"></div>
<div class="cn" style="left:1253px;top:578px;height:18px"></div>
<div class="cw" style="left:1297px;top:578px;height:18px"></div>
<div class="cw" style="left:1341px;top:578px;height:18px"></div>
<div class="cn" style="left:1385px;top:578px;height:18px"></div>
<div class="cn" style="left:1429px;top:578px;height:18px"></div>
<div class="cn" style="left:1473px;top:578px;height:18px"></div>
<div class="cn" style="left:1517px;top:578px;height:18px"></div>
<div class="cn" style="left:1561px;top:578px;height:18px"></div>
<div class="cw" style="left:1605px;top:578px;height:18px"></div>
<div class="cw" style="left:1649px;top:578px;height:18px"></div>
<div style="position:absolute;left:3px;top:596px;width:150px;height:18px;background:#fff7a0;border-bottom:1px solid #8c8658;border-right:1px solid #8a8a70;"></div>
<div style="position:absolute;left:6px;top:596px;width:144px;height:17px;overflow:hidden;white-space:nowrap;font-size:15.5px;line-height:15px;padding-top:4px;font-weight:bold;color:#111;-webkit-text-stroke:0.25px #111;">Crinone 8% [mg]</div>
<div class="cn" style="left:153px;top:596px;height:18px"></div>
<div class="cn" style="left:197px;top:596px;height:18px"></div>
<div class="cn" style="left:241px;top:596px;height:18px"></div>
<div class="cn" style="left:285px;top:596px;height:18px"></div>
<div class="cn" style="left:329px;top:596px;height:18px"></div>
<div class="cw" style="left:373px;top:596px;height:18px"></div>
<div class="cw" style="left:417px;top:596px;height:18px"></div>
<div class="cn" style="left:461px;top:596px;height:18px"></div>
<div class="cn" style="left:505px;top:596px;height:18px"></div>
<div class="cn" style="left:549px;top:596px;height:18px"></div>
<div class="cn" style="left:593px;top:596px;height:18px"></div>
<div class="cn" style="left:637px;top:596px;height:18px"></div>
<div class="cw" style="left:681px;top:596px;height:18px"></div>
<div class="cw" style="left:725px;top:596px;height:18px"></div>
<div class="cn" style="left:769px;top:596px;height:18px"></div>
<div class="cn" style="left:813px;top:596px;height:18px"></div>
<div class="cn" style="left:857px;top:596px;height:18px"></div>
<div class="cn" style="left:901px;top:596px;height:18px"></div>
<div class="cn" style="left:945px;top:596px;height:18px"></div>
<div class="cw" style="left:989px;top:596px;height:18px"></div>
<div class="cw" style="left:1033px;top:596px;height:18px"></div>
<div class="cn" style="left:1077px;top:596px;height:18px"></div>
<div class="cn" style="left:1121px;top:596px;height:18px"></div>
<div class="cn" style="left:1165px;top:596px;height:18px"></div>
<div class="cn" style="left:1209px;top:596px;height:18px"></div>
<div class="cn" style="left:1253px;top:596px;height:18px"></div>
<div class="cw" style="left:1297px;top:596px;height:18px"></div>
<div class="cw" style="left:1341px;top:596px;height:18px"></div>
<div class="cn" style="left:1385px;top:596px;height:18px"></div>
<div class="cn" style="left:1429px;top:596px;height:18px"></div>
<div class="cn" style="left:1473px;top:596px;height:18px"></div>
<div class="cn" style="left:1517px;top:596px;height:18px"></div>
<div class="cn" style="left:1561px;top:596px;height:18px"></div>
<div class="cw" style="left:1605px;top:596px;height:18px"></div>
<div class="cw" style="left:1649px;top:596px;height:18px"></div>
<div style="position:absolute;left:3px;top:614px;width:150px;height:18px;background:#fff7a0;border-bottom:1px solid #8c8658;border-right:1px solid #8a8a70;"></div>
<div style="position:absolute;left:6px;top:614px;width:144px;height:17px;overflow:hidden;white-space:nowrap;font-size:15.5px;line-height:15px;padding-top:4px;font-style:italic;color:#333;">Estinette [Confetto]</div>
<div class="cn" style="left:153px;top:614px;height:18px"></div>
<div class="cn" style="left:197px;top:614px;height:18px"></div>
<div class="cn" style="left:241px;top:614px;height:18px"></div>
<div class="cn" style="left:285px;top:614px;height:18px"></div>
<div class="cn" style="left:329px;top:614px;height:18px"></div>
<div class="cw" style="left:373px;top:614px;height:18px"></div>
<div class="cw" style="left:417px;top:614px;height:18px"></div>
<div class="cn" style="left:461px;top:614px;height:18px"></div>
<div class="cn" style="left:505px;top:614px;height:18px"></div>
<div class="cn" style="left:549px;top:614px;height:18px"></div>
<div class="cn" style="left:593px;top:614px;height:18px"></div>
<div class="cn" style="left:637px;top:614px;height:18px"></div>
<div class="cw" style="left:681px;top:614px;height:18px"></div>
<div class="cw" style="left:725px;top:614px;height:18px"></div>
<div class="cn" style="left:769px;top:614px;height:18px"></div>
<div class="cn" style="left:813px;top:614px;height:18px"></div>
<div class="cn" style="left:857px;top:614px;height:18px"></div>
<div class="cn" style="left:901px;top:614px;height:18px"></div>
<div class="cn" style="left:945px;top:614px;height:18px"></div>
<div class="cw" style="left:989px;top:614px;height:18px"></div>
<div class="cw" style="left:1033px;top:614px;height:18px"></div>
<div class="cn" style="left:1077px;top:614px;height:18px"></div>
<div class="cn" style="left:1121px;top:614px;height:18px"></div>
<div class="cn" style="left:1165px;top:614px;height:18px"></div>
<div class="cn" style="left:1209px;top:614px;height:18px"></div>
<div class="cn" style="left:1253px;top:614px;height:18px"></div>
<div class="cw" style="left:1297px;top:614px;height:18px"></div>
<div class="cw" style="left:1341px;top:614px;height:18px"></div>
<div class="cn" style="left:1385px;top:614px;height:18px"></div>
<div class="cn" style="left:1429px;top:614px;height:18px"></div>
<div class="cn" style="left:1473px;top:614px;height:18px"></div>
<div class="cn" style="left:1517px;top:614px;height:18px"></div>
<div class="cn" style="left:1561px;top:614px;height:18px"></div>
<div class="cw" style="left:1605px;top:614px;height:18px"></div>
<div class="cw" style="left:1649px;top:614px;height:18px"></div>
<div style="position:absolute;left:3px;top:632px;width:150px;height:18px;background:#fff7a0;border-bottom:1px solid #8c8658;border-right:1px solid #8a8a70;"></div>
<div style="position:absolute;left:6px;top:632px;width:144px;height:17px;overflow:hidden;white-space:nowrap;font-size:15.5px;line-height:15px;padding-top:4px;font-style:italic;color:#333;">Primolut Nor [Conf</div>
<div class="cn" style="left:153px;top:632px;height:18px"></div>
<div class="cn" style="left:197px;top:632px;height:18px"></div>
<div class="cn" style="left:241px;top:632px;height:18px"></div>
<div class="cn" style="left:285px;top:632px;height:18px"></div>
<div class="cn" style="left:329px;top:632px;height:18px"></div>
<div class="cw" style="left:373px;top:632px;height:18px"></div>
<div class="cw" style="left:417px;top:632px;height:18px"></div>
<div class="cn" style="left:461px;top:632px;height:18px"></div>
<div class="cn" style="left:505px;top:632px;height:18px"></div>
<div class="cn" style="left:549px;top:632px;height:18px"></div>
<div class="cn" style="left:593px;top:632px;height:18px"></div>
<div class="cn" style="left:637px;top:632px;height:18px"></div>
<div class="cw" style="left:681px;top:632px;height:18px"></div>
<div class="cw" style="left:725px;top:632px;height:18px"></div>
<div class="cn" style="left:769px;top:632px;height:18px"></div>
<div class="cn" style="left:813px;top:632px;height:18px"></div>
<div class="cn" style="left:857px;top:632px;height:18px"></div>
<div class="cn" style="left:901px;top:632px;height:18px"></div>
<div class="cn" style="left:945px;top:632px;height:18px"></div>
<div class="cw" style="left:989px;top:632px;height:18px"></div>
<div class="cw" style="left:1033px;top:632px;height:18px"></div>
<div class="cn" style="left:1077px;top:632px;height:18px"></div>
<div class="cn" style="left:1121px;top:632px;height:18px"></div>
<div class="cn" style="left:1165px;top:632px;height:18px"></div>
<div class="cn" style="left:1209px;top:632px;height:18px"></div>
<div class="cn" style="left:1253px;top:632px;height:18px"></div>
<div class="cw" style="left:1297px;top:632px;height:18px"></div>
<div class="cw" style="left:1341px;top:632px;height:18px"></div>
<div class="cn" style="left:1385px;top:632px;height:18px"></div>
<div class="cn" style="left:1429px;top:632px;height:18px"></div>
<div class="cn" style="left:1473px;top:632px;height:18px"></div>
<div class="cn" style="left:1517px;top:632px;height:18px"></div>
<div class="cn" style="left:1561px;top:632px;height:18px"></div>
<div class="cw" style="left:1605px;top:632px;height:18px"></div>
<div class="cw" style="left:1649px;top:632px;height:18px"></div>
<div style="position:absolute;left:3px;top:650px;width:150px;height:18px;background:#fff7a0;border-bottom:1px solid #8c8658;border-right:1px solid #8a8a70;"></div>
<div style="position:absolute;left:6px;top:650px;width:144px;height:17px;overflow:hidden;white-space:nowrap;font-size:15.5px;line-height:15px;padding-top:4px;font-weight:bold;color:#111;-webkit-text-stroke:0.25px #111;">Orgalutran [mg]</div>
<div class="cn" style="left:153px;top:650px;height:18px"></div>
<div class="cn" style="left:197px;top:650px;height:18px"></div>
<div class="cn" style="left:241px;top:650px;height:18px"></div>
<div class="cn" style="left:285px;top:650px;height:18px"></div>
<div class="cn" style="left:329px;top:650px;height:18px"></div>
<div class="cw" style="left:373px;top:650px;height:18px"></div>
<div class="cw" style="left:417px;top:650px;height:18px"></div>
<div class="cn" style="left:461px;top:650px;height:18px"></div>
<div class="cn" style="left:505px;top:650px;height:18px"></div>
<div class="cn" style="left:549px;top:650px;height:18px"></div>
<div class="cn" style="left:593px;top:650px;height:18px"></div>
<div class="cn" style="left:637px;top:650px;height:18px"></div>
<div class="cw" style="left:681px;top:650px;height:18px"></div>
<div class="cw" style="left:725px;top:650px;height:18px"></div>
<div class="cn" style="left:769px;top:650px;height:18px"></div>
<div class="cn" style="left:813px;top:650px;height:18px"></div>
<div class="cn" style="left:857px;top:650px;height:18px"></div>
<div class="cn" style="left:901px;top:650px;height:18px"></div>
<div class="cn" style="left:945px;top:650px;height:18px"></div>
<div class="cw" style="left:989px;top:650px;height:18px"></div>
<div class="cw" style="left:1033px;top:650px;height:18px"></div>
<div class="cn" style="left:1077px;top:650px;height:18px"></div>
<div class="cn" style="left:1121px;top:650px;height:18px"></div>
<div class="cn" style="left:1165px;top:650px;height:18px"></div>
<div class="cn" style="left:1209px;top:650px;height:18px"></div>
<div class="cn" style="left:1253px;top:650px;height:18px"></div>
<div class="cw" style="left:1297px;top:650px;height:18px"></div>
<div class="cw" style="left:1341px;top:650px;height:18px"></div>
<div class="cn" style="left:1385px;top:650px;height:18px"></div>
<div class="cn" style="left:1429px;top:650px;height:18px"></div>
<div class="cn" style="left:1473px;top:650px;height:18px"></div>
<div class="cn" style="left:1517px;top:650px;height:18px"></div>
<div class="cn" style="left:1561px;top:650px;height:18px"></div>
<div class="cw" style="left:1605px;top:650px;height:18px"></div>
<div class="cw" style="left:1649px;top:650px;height:18px"></div>
<div style="position:absolute;left:0px;top:668px;width:1651px;height:18px;background:linear-gradient(#fafafa 0,#c4c4c4 8%,#d8d8d8 35%,#fcfcfc 85%,#fff);border-bottom:1px solid #6e6e6e;"></div>
<div style="position:absolute;left:9px;top:671px;white-space:nowrap;font-size:15px;font-weight:bold;line-height:15px;color:#111;-webkit-text-stroke:0.35px currentColor;">[–]&nbsp; Ormoni</div>
<div style="position:absolute;left:3px;top:686px;width:150px;height:17px;background:#fff7a0;border-bottom:1px solid #8c8658;border-right:1px solid #8a8a70;"></div>
<div style="position:absolute;left:6px;top:686px;width:144px;height:16px;overflow:hidden;white-space:nowrap;font-size:15.5px;line-height:15px;padding-top:4px;font-weight:bold;color:#111;-webkit-text-stroke:0.25px #111;">E2&nbsp; [pg/ml]</div>
<div class="cn" style="left:153px;top:686px;height:17px"></div>
<div class="cn" style="left:197px;top:686px;height:17px"></div>
<div class="cn" style="left:241px;top:686px;height:17px"></div>
<div class="cn" style="left:285px;top:686px;height:17px"></div>
<div class="cn" style="left:329px;top:686px;height:17px"></div>
<div class="cw" style="left:373px;top:686px;height:17px"></div>
<div class="cw" style="left:417px;top:686px;height:17px"></div>
<div class="cn" style="left:461px;top:686px;height:17px"></div>
<div class="cn" style="left:505px;top:686px;height:17px"></div>
<div class="cn" style="left:549px;top:686px;height:17px"></div>
<div class="cn" style="left:593px;top:686px;height:17px"></div>
<div class="cn" style="left:637px;top:686px;height:17px"></div>
<div class="cw" style="left:681px;top:686px;height:17px"></div>
<div class="cw" style="left:725px;top:686px;height:17px"></div>
<div class="cn" style="left:769px;top:686px;height:17px"></div>
<div class="cn" style="left:813px;top:686px;height:17px"></div>
<div class="cn" style="left:857px;top:686px;height:17px"></div>
<div class="cn" style="left:901px;top:686px;height:17px"></div>
<div class="cn" style="left:945px;top:686px;height:17px"></div>
<div class="cw" style="left:989px;top:686px;height:17px"></div>
<div class="cw" style="left:1033px;top:686px;height:17px"></div>
<div class="cn" style="left:1077px;top:686px;height:17px"></div>
<div class="cn" style="left:1121px;top:686px;height:17px"></div>
<div class="cn" style="left:1165px;top:686px;height:17px"></div>
<div class="cn" style="left:1209px;top:686px;height:17px"></div>
<div class="cn" style="left:1253px;top:686px;height:17px"></div>
<div class="cw" style="left:1297px;top:686px;height:17px"></div>
<div class="cw" style="left:1341px;top:686px;height:17px"></div>
<div class="cn" style="left:1385px;top:686px;height:17px"></div>
<div class="cn" style="left:1429px;top:686px;height:17px"></div>
<div class="cn" style="left:1473px;top:686px;height:17px"></div>
<div class="cn" style="left:1517px;top:686px;height:17px"></div>
<div class="cn" style="left:1561px;top:686px;height:17px"></div>
<div class="cw" style="left:1605px;top:686px;height:17px"></div>
<div class="cw" style="left:1649px;top:686px;height:17px"></div>
<div style="position:absolute;left:3px;top:703px;width:150px;height:18px;background:#fff7a0;border-bottom:1px solid #8c8658;border-right:1px solid #8a8a70;"></div>
<div style="position:absolute;left:6px;top:703px;width:144px;height:17px;overflow:hidden;white-space:nowrap;font-size:15.5px;line-height:15px;padding-top:4px;font-weight:bold;color:#111;-webkit-text-stroke:0.25px #111;">HCG&nbsp; [mIU/ml]</div>
<div class="cn" style="left:153px;top:703px;height:18px"></div>
<div class="cn" style="left:197px;top:703px;height:18px"></div>
<div class="cn" style="left:241px;top:703px;height:18px"></div>
<div class="cn" style="left:285px;top:703px;height:18px"></div>
<div class="cn" style="left:329px;top:703px;height:18px"></div>
<div class="cw" style="left:373px;top:703px;height:18px"></div>
<div class="cw" style="left:417px;top:703px;height:18px"></div>
<div class="cn" style="left:461px;top:703px;height:18px"></div>
<div class="cn" style="left:505px;top:703px;height:18px"></div>
<div class="cn" style="left:549px;top:703px;height:18px"></div>
<div class="cn" style="left:593px;top:703px;height:18px"></div>
<div class="cn" style="left:637px;top:703px;height:18px"></div>
<div class="cw" style="left:681px;top:703px;height:18px"></div>
<div class="cw" style="left:725px;top:703px;height:18px"></div>
<div class="cn" style="left:769px;top:703px;height:18px"></div>
<div class="cn" style="left:813px;top:703px;height:18px"></div>
<div class="cn" style="left:857px;top:703px;height:18px"></div>
<div class="cn" style="left:901px;top:703px;height:18px"></div>
<div class="cn" style="left:945px;top:703px;height:18px"></div>
<div class="cw" style="left:989px;top:703px;height:18px"></div>
<div class="cw" style="left:1033px;top:703px;height:18px"></div>
<div class="cn" style="left:1077px;top:703px;height:18px"></div>
<div class="cn" style="left:1121px;top:703px;height:18px"></div>
<div class="cn" style="left:1165px;top:703px;height:18px"></div>
<div class="cn" style="left:1209px;top:703px;height:18px"></div>
<div class="cn" style="left:1253px;top:703px;height:18px"></div>
<div class="cw" style="left:1297px;top:703px;height:18px"></div>
<div class="cw" style="left:1341px;top:703px;height:18px"></div>
<div class="cn" style="left:1385px;top:703px;height:18px"></div>
<div class="cn" style="left:1429px;top:703px;height:18px"></div>
<div class="cn" style="left:1473px;top:703px;height:18px"></div>
<div class="cn" style="left:1517px;top:703px;height:18px"></div>
<div class="cn" style="left:1561px;top:703px;height:18px"></div>
<div class="cw" style="left:1605px;top:703px;height:18px"></div>
<div class="cw" style="left:1649px;top:703px;height:18px"></div>
<div style="position:absolute;left:3px;top:721px;width:150px;height:18px;background:#fff7a0;border-bottom:1px solid #8c8658;border-right:1px solid #8a8a70;"></div>
<div style="position:absolute;left:6px;top:721px;width:144px;height:17px;overflow:hidden;white-space:nowrap;font-size:15.5px;line-height:15px;padding-top:4px;font-weight:bold;color:#111;-webkit-text-stroke:0.25px #111;">Progesterone&nbsp; [n...</div>
<div class="cn" style="left:153px;top:721px;height:18px"></div>
<div class="cn" style="left:197px;top:721px;height:18px"></div>
<div class="cn" style="left:241px;top:721px;height:18px"></div>
<div class="cn" style="left:285px;top:721px;height:18px"></div>
<div class="cn" style="left:329px;top:721px;height:18px"></div>
<div class="cw" style="left:373px;top:721px;height:18px"></div>
<div class="cw" style="left:417px;top:721px;height:18px"></div>
<div class="cn" style="left:461px;top:721px;height:18px"></div>
<div class="cn" style="left:505px;top:721px;height:18px"></div>
<div class="cn" style="left:549px;top:721px;height:18px"></div>
<div class="cn" style="left:593px;top:721px;height:18px"></div>
<div class="cn" style="left:637px;top:721px;height:18px"></div>
<div class="cw" style="left:681px;top:721px;height:18px"></div>
<div class="cw" style="left:725px;top:721px;height:18px"></div>
<div class="cn" style="left:769px;top:721px;height:18px"></div>
<div class="cn" style="left:813px;top:721px;height:18px"></div>
<div class="cn" style="left:857px;top:721px;height:18px"></div>
<div class="cn" style="left:901px;top:721px;height:18px"></div>
<div class="cn" style="left:945px;top:721px;height:18px"></div>
<div class="cw" style="left:989px;top:721px;height:18px"></div>
<div class="cw" style="left:1033px;top:721px;height:18px"></div>
<div class="cn" style="left:1077px;top:721px;height:18px"></div>
<div class="cn" style="left:1121px;top:721px;height:18px"></div>
<div class="cn" style="left:1165px;top:721px;height:18px"></div>
<div class="cn" style="left:1209px;top:721px;height:18px"></div>
<div class="cn" style="left:1253px;top:721px;height:18px"></div>
<div class="cw" style="left:1297px;top:721px;height:18px"></div>
<div class="cw" style="left:1341px;top:721px;height:18px"></div>
<div class="cn" style="left:1385px;top:721px;height:18px"></div>
<div class="cn" style="left:1429px;top:721px;height:18px"></div>
<div class="cn" style="left:1473px;top:721px;height:18px"></div>
<div class="cn" style="left:1517px;top:721px;height:18px"></div>
<div class="cn" style="left:1561px;top:721px;height:18px"></div>
<div class="cw" style="left:1605px;top:721px;height:18px"></div>
<div class="cw" style="left:1649px;top:721px;height:18px"></div>
<div style="position:absolute;left:0px;top:739px;width:1651px;height:18px;background:linear-gradient(#fafafa 0,#c4c4c4 8%,#d8d8d8 35%,#fcfcfc 85%,#fff);border-bottom:1px solid #6e6e6e;"></div>
<div style="position:absolute;left:9px;top:742px;white-space:nowrap;font-size:15px;font-weight:bold;line-height:15px;color:#111;-webkit-text-stroke:0.35px currentColor;">[–]&nbsp; Ecografia</div>
<div style="position:absolute;left:3px;top:757px;width:150px;height:18px;background:#fff7a0;border-bottom:1px solid #8c8658;border-right:1px solid #8a8a70;"></div>
<div style="position:absolute;left:6px;top:757px;width:144px;height:17px;overflow:hidden;white-space:nowrap;font-size:15.5px;line-height:15px;padding-top:4px;font-weight:bold;color:#111;-webkit-text-stroke:0.25px #111;">Esame</div>
<div class="cn" style="left:153px;top:757px;height:18px"></div>
<div class="cn" style="left:197px;top:757px;height:18px"></div>
<div class="cn" style="left:241px;top:757px;height:18px"></div>
<div class="cn" style="left:285px;top:757px;height:18px"></div>
<div class="cn" style="left:329px;top:757px;height:18px"></div>
<div class="cw" style="left:373px;top:757px;height:18px"></div>
<div class="cw" style="left:417px;top:757px;height:18px"></div>
<div class="cn" style="left:461px;top:757px;height:18px"></div>
<div class="cn" style="left:505px;top:757px;height:18px"></div>
<div class="cn" style="left:549px;top:757px;height:18px"></div>
<div class="cn" style="left:593px;top:757px;height:18px"></div>
<div class="cn" style="left:637px;top:757px;height:18px"></div>
<div class="cw" style="left:681px;top:757px;height:18px"></div>
<div class="cw" style="left:725px;top:757px;height:18px"></div>
<div class="cn" style="left:769px;top:757px;height:18px"></div>
<div class="cn" style="left:813px;top:757px;height:18px"></div>
<div class="cn" style="left:857px;top:757px;height:18px"></div>
<div class="cn" style="left:901px;top:757px;height:18px"></div>
<div class="cn" style="left:945px;top:757px;height:18px"></div>
<div class="cw" style="left:989px;top:757px;height:18px"></div>
<div class="cw" style="left:1033px;top:757px;height:18px"></div>
<div class="cn" style="left:1077px;top:757px;height:18px"></div>
<div class="cn" style="left:1121px;top:757px;height:18px"></div>
<div class="cn" style="left:1165px;top:757px;height:18px"></div>
<div class="cn" style="left:1209px;top:757px;height:18px"></div>
<div class="cn" style="left:1253px;top:757px;height:18px"></div>
<div class="cw" style="left:1297px;top:757px;height:18px"></div>
<div class="cw" style="left:1341px;top:757px;height:18px"></div>
<div class="cn" style="left:1385px;top:757px;height:18px"></div>
<div class="cn" style="left:1429px;top:757px;height:18px"></div>
<div class="cn" style="left:1473px;top:757px;height:18px"></div>
<div class="cn" style="left:1517px;top:757px;height:18px"></div>
<div class="cn" style="left:1561px;top:757px;height:18px"></div>
<div class="cw" style="left:1605px;top:757px;height:18px"></div>
<div class="cw" style="left:1649px;top:757px;height:18px"></div>
<div style="position:absolute;left:0px;top:775px;width:1651px;height:18px;background:linear-gradient(#fafafa 0,#c4c4c4 8%,#d8d8d8 35%,#fcfcfc 85%,#fff);border-bottom:1px solid #6e6e6e;"></div>
<div style="position:absolute;left:9px;top:778px;white-space:nowrap;font-size:15px;font-weight:bold;line-height:15px;color:#111;-webkit-text-stroke:0.35px currentColor;">[–]&nbsp; eco Follicoli: <span style="color:#1a1ad0;">NUMERICO</span></div>
<div style="position:absolute;left:3px;top:793px;width:150px;height:18px;background:#fff7a0;border-bottom:1px solid #8c8658;border-right:1px solid #8a8a70;"></div>
<div style="position:absolute;left:6px;top:793px;width:144px;height:17px;overflow:hidden;white-space:nowrap;font-size:15.5px;line-height:15px;padding-top:4px;font-weight:bold;color:#111;-webkit-text-stroke:0.25px #111;">Spessore endom...</div>
<div class="cn" style="left:153px;top:793px;height:18px"></div>
<div class="cn" style="left:197px;top:793px;height:18px"></div>
<div class="cn" style="left:241px;top:793px;height:18px"></div>
<div class="cn" style="left:285px;top:793px;height:18px"></div>
<div class="cn" style="left:329px;top:793px;height:18px"></div>
<div class="cw" style="left:373px;top:793px;height:18px"></div>
<div class="cw" style="left:417px;top:793px;height:18px"></div>
<div class="cn" style="left:461px;top:793px;height:18px"></div>
<div class="cn" style="left:505px;top:793px;height:18px"></div>
<div class="cn" style="left:549px;top:793px;height:18px"></div>
<div class="cn" style="left:593px;top:793px;height:18px"></div>
<div class="cn" style="left:637px;top:793px;height:18px"></div>
<div class="cw" style="left:681px;top:793px;height:18px"></div>
<div class="cw" style="left:725px;top:793px;height:18px"></div>
<div class="cn" style="left:769px;top:793px;height:18px"></div>
<div class="cn" style="left:813px;top:793px;height:18px"></div>
<div class="cn" style="left:857px;top:793px;height:18px"></div>
<div class="cn" style="left:901px;top:793px;height:18px"></div>
<div class="cn" style="left:945px;top:793px;height:18px"></div>
<div class="cw" style="left:989px;top:793px;height:18px"></div>
<div class="cw" style="left:1033px;top:793px;height:18px"></div>
<div class="cn" style="left:1077px;top:793px;height:18px"></div>
<div class="cn" style="left:1121px;top:793px;height:18px"></div>
<div class="cn" style="left:1165px;top:793px;height:18px"></div>
<div class="cn" style="left:1209px;top:793px;height:18px"></div>
<div class="cn" style="left:1253px;top:793px;height:18px"></div>
<div class="cw" style="left:1297px;top:793px;height:18px"></div>
<div class="cw" style="left:1341px;top:793px;height:18px"></div>
<div class="cn" style="left:1385px;top:793px;height:18px"></div>
<div class="cn" style="left:1429px;top:793px;height:18px"></div>
<div class="cn" style="left:1473px;top:793px;height:18px"></div>
<div class="cn" style="left:1517px;top:793px;height:18px"></div>
<div class="cn" style="left:1561px;top:793px;height:18px"></div>
<div class="cw" style="left:1605px;top:793px;height:18px"></div>
<div class="cw" style="left:1649px;top:793px;height:18px"></div>
<div style="position:absolute;left:3px;top:811px;width:150px;height:18px;background:#fff7a0;border-bottom:1px solid #8c8658;border-right:1px solid #8a8a70;"></div>
<div style="position:absolute;left:6px;top:811px;width:144px;height:17px;overflow:hidden;white-space:nowrap;font-size:15.5px;line-height:15px;padding-top:4px;font-weight:bold;color:#111;-webkit-text-stroke:0.25px #111;">Totale</div>
<div class="cn" style="left:153px;top:811px;height:18px"></div>
<div class="cn" style="left:197px;top:811px;height:18px"></div>
<div class="cn" style="left:241px;top:811px;height:18px"></div>
<div class="cn" style="left:285px;top:811px;height:18px"></div>
<div class="cn" style="left:329px;top:811px;height:18px"></div>
<div class="cw" style="left:373px;top:811px;height:18px"></div>
<div class="cw" style="left:417px;top:811px;height:18px"></div>
<div class="cn" style="left:461px;top:811px;height:18px"></div>
<div class="cn" style="left:505px;top:811px;height:18px"></div>
<div class="cn" style="left:549px;top:811px;height:18px"></div>
<div class="cn" style="left:593px;top:811px;height:18px"></div>
<div class="cn" style="left:637px;top:811px;height:18px"></div>
<div class="cw" style="left:681px;top:811px;height:18px"></div>
<div class="cw" style="left:725px;top:811px;height:18px"></div>
<div class="cn" style="left:769px;top:811px;height:18px"></div>
<div class="cn" style="left:813px;top:811px;height:18px"></div>
<div class="cn" style="left:857px;top:811px;height:18px"></div>
<div class="cn" style="left:901px;top:811px;height:18px"></div>
<div class="cn" style="left:945px;top:811px;height:18px"></div>
<div class="cw" style="left:989px;top:811px;height:18px"></div>
<div class="cw" style="left:1033px;top:811px;height:18px"></div>
<div class="cn" style="left:1077px;top:811px;height:18px"></div>
<div class="cn" style="left:1121px;top:811px;height:18px"></div>
<div class="cn" style="left:1165px;top:811px;height:18px"></div>
<div class="cn" style="left:1209px;top:811px;height:18px"></div>
<div class="cn" style="left:1253px;top:811px;height:18px"></div>
<div class="cw" style="left:1297px;top:811px;height:18px"></div>
<div class="cw" style="left:1341px;top:811px;height:18px"></div>
<div class="cn" style="left:1385px;top:811px;height:18px"></div>
<div class="cn" style="left:1429px;top:811px;height:18px"></div>
<div class="cn" style="left:1473px;top:811px;height:18px"></div>
<div class="cn" style="left:1517px;top:811px;height:18px"></div>
<div class="cn" style="left:1561px;top:811px;height:18px"></div>
<div class="cw" style="left:1605px;top:811px;height:18px"></div>
<div class="cw" style="left:1649px;top:811px;height:18px"></div>
<div style="position:absolute;left:3px;top:829px;width:150px;height:18px;background:#fff7a0;border-bottom:1px solid #8c8658;border-right:1px solid #8a8a70;"></div>
<div style="position:absolute;left:6px;top:829px;width:144px;height:17px;overflow:hidden;white-space:nowrap;font-size:15.5px;line-height:15px;padding-top:4px;font-weight:bold;color:#111;-webkit-text-stroke:0.25px #111;">Follicolo primario...</div>
<div class="cn" style="left:153px;top:829px;height:18px"></div>
<div class="cn" style="left:197px;top:829px;height:18px"></div>
<div class="cn" style="left:241px;top:829px;height:18px"></div>
<div class="cn" style="left:285px;top:829px;height:18px"></div>
<div class="cn" style="left:329px;top:829px;height:18px"></div>
<div class="cw" style="left:373px;top:829px;height:18px"></div>
<div class="cw" style="left:417px;top:829px;height:18px"></div>
<div class="cn" style="left:461px;top:829px;height:18px"></div>
<div class="cn" style="left:505px;top:829px;height:18px"></div>
<div class="cn" style="left:549px;top:829px;height:18px"></div>
<div class="cn" style="left:593px;top:829px;height:18px"></div>
<div class="cn" style="left:637px;top:829px;height:18px"></div>
<div class="cw" style="left:681px;top:829px;height:18px"></div>
<div class="cw" style="left:725px;top:829px;height:18px"></div>
<div class="cn" style="left:769px;top:829px;height:18px"></div>
<div class="cn" style="left:813px;top:829px;height:18px"></div>
<div class="cn" style="left:857px;top:829px;height:18px"></div>
<div class="cn" style="left:901px;top:829px;height:18px"></div>
<div class="cn" style="left:945px;top:829px;height:18px"></div>
<div class="cw" style="left:989px;top:829px;height:18px"></div>
<div class="cw" style="left:1033px;top:829px;height:18px"></div>
<div class="cn" style="left:1077px;top:829px;height:18px"></div>
<div class="cn" style="left:1121px;top:829px;height:18px"></div>
<div class="cn" style="left:1165px;top:829px;height:18px"></div>
<div class="cn" style="left:1209px;top:829px;height:18px"></div>
<div class="cn" style="left:1253px;top:829px;height:18px"></div>
<div class="cw" style="left:1297px;top:829px;height:18px"></div>
<div class="cw" style="left:1341px;top:829px;height:18px"></div>
<div class="cn" style="left:1385px;top:829px;height:18px"></div>
<div class="cn" style="left:1429px;top:829px;height:18px"></div>
<div class="cn" style="left:1473px;top:829px;height:18px"></div>
<div class="cn" style="left:1517px;top:829px;height:18px"></div>
<div class="cn" style="left:1561px;top:829px;height:18px"></div>
<div class="cw" style="left:1605px;top:829px;height:18px"></div>
<div class="cw" style="left:1649px;top:829px;height:18px"></div>
<div style="position:absolute;left:3px;top:847px;width:150px;height:18px;background:#fff7a0;border-bottom:1px solid #8c8658;border-right:1px solid #8a8a70;"></div>
<div style="position:absolute;left:6px;top:847px;width:144px;height:17px;overflow:hidden;white-space:nowrap;font-size:15.5px;line-height:15px;padding-top:4px;font-weight:bold;color:#111;-webkit-text-stroke:0.25px #111;">Follicolo primario...</div>
<div class="cn" style="left:153px;top:847px;height:18px"></div>
<div class="cn" style="left:197px;top:847px;height:18px"></div>
<div class="cn" style="left:241px;top:847px;height:18px"></div>
<div class="cn" style="left:285px;top:847px;height:18px"></div>
<div class="cn" style="left:329px;top:847px;height:18px"></div>
<div class="cw" style="left:373px;top:847px;height:18px"></div>
<div class="cw" style="left:417px;top:847px;height:18px"></div>
<div class="cn" style="left:461px;top:847px;height:18px"></div>
<div class="cn" style="left:505px;top:847px;height:18px"></div>
<div class="cn" style="left:549px;top:847px;height:18px"></div>
<div class="cn" style="left:593px;top:847px;height:18px"></div>
<div class="cn" style="left:637px;top:847px;height:18px"></div>
<div class="cw" style="left:681px;top:847px;height:18px"></div>
<div class="cw" style="left:725px;top:847px;height:18px"></div>
<div class="cn" style="left:769px;top:847px;height:18px"></div>
<div class="cn" style="left:813px;top:847px;height:18px"></div>
<div class="cn" style="left:857px;top:847px;height:18px"></div>
<div class="cn" style="left:901px;top:847px;height:18px"></div>
<div class="cn" style="left:945px;top:847px;height:18px"></div>
<div class="cw" style="left:989px;top:847px;height:18px"></div>
<div class="cw" style="left:1033px;top:847px;height:18px"></div>
<div class="cn" style="left:1077px;top:847px;height:18px"></div>
<div class="cn" style="left:1121px;top:847px;height:18px"></div>
<div class="cn" style="left:1165px;top:847px;height:18px"></div>
<div class="cn" style="left:1209px;top:847px;height:18px"></div>
<div class="cn" style="left:1253px;top:847px;height:18px"></div>
<div class="cw" style="left:1297px;top:847px;height:18px"></div>
<div class="cw" style="left:1341px;top:847px;height:18px"></div>
<div class="cn" style="left:1385px;top:847px;height:18px"></div>
<div class="cn" style="left:1429px;top:847px;height:18px"></div>
<div class="cn" style="left:1473px;top:847px;height:18px"></div>
<div class="cn" style="left:1517px;top:847px;height:18px"></div>
<div class="cn" style="left:1561px;top:847px;height:18px"></div>
<div class="cw" style="left:1605px;top:847px;height:18px"></div>
<div class="cw" style="left:1649px;top:847px;height:18px"></div>
<div style="position:absolute;left:3px;top:865px;width:150px;height:18px;background:#fff7a0;border-bottom:1px solid #8c8658;border-right:1px solid #8a8a70;"></div>
<div style="position:absolute;left:6px;top:865px;width:144px;height:17px;overflow:hidden;white-space:nowrap;font-size:15.5px;line-height:15px;padding-top:4px;font-weight:bold;color:#111;-webkit-text-stroke:0.25px #111;">D-S sopra 22</div>
<div class="cn" style="left:153px;top:865px;height:18px"></div>
<div class="cn" style="left:197px;top:865px;height:18px"></div>
<div class="cn" style="left:241px;top:865px;height:18px"></div>
<div class="cn" style="left:285px;top:865px;height:18px"></div>
<div class="cn" style="left:329px;top:865px;height:18px"></div>
<div class="cw" style="left:373px;top:865px;height:18px"></div>
<div class="cw" style="left:417px;top:865px;height:18px"></div>
<div class="cn" style="left:461px;top:865px;height:18px"></div>
<div class="cn" style="left:505px;top:865px;height:18px"></div>
<div class="cn" style="left:549px;top:865px;height:18px"></div>
<div class="cn" style="left:593px;top:865px;height:18px"></div>
<div class="cn" style="left:637px;top:865px;height:18px"></div>
<div class="cw" style="left:681px;top:865px;height:18px"></div>
<div class="cw" style="left:725px;top:865px;height:18px"></div>
<div class="cn" style="left:769px;top:865px;height:18px"></div>
<div class="cn" style="left:813px;top:865px;height:18px"></div>
<div class="cn" style="left:857px;top:865px;height:18px"></div>
<div class="cn" style="left:901px;top:865px;height:18px"></div>
<div class="cn" style="left:945px;top:865px;height:18px"></div>
<div class="cw" style="left:989px;top:865px;height:18px"></div>
<div class="cw" style="left:1033px;top:865px;height:18px"></div>
<div class="cn" style="left:1077px;top:865px;height:18px"></div>
<div class="cn" style="left:1121px;top:865px;height:18px"></div>
<div class="cn" style="left:1165px;top:865px;height:18px"></div>
<div class="cn" style="left:1209px;top:865px;height:18px"></div>
<div class="cn" style="left:1253px;top:865px;height:18px"></div>
<div class="cw" style="left:1297px;top:865px;height:18px"></div>
<div class="cw" style="left:1341px;top:865px;height:18px"></div>
<div class="cn" style="left:1385px;top:865px;height:18px"></div>
<div class="cn" style="left:1429px;top:865px;height:18px"></div>
<div class="cn" style="left:1473px;top:865px;height:18px"></div>
<div class="cn" style="left:1517px;top:865px;height:18px"></div>
<div class="cn" style="left:1561px;top:865px;height:18px"></div>
<div class="cw" style="left:1605px;top:865px;height:18px"></div>
<div class="cw" style="left:1649px;top:865px;height:18px"></div>
<div style="position:absolute;left:3px;top:883px;width:150px;height:18px;background:#fff7a0;border-bottom:1px solid #8c8658;border-right:1px solid #8a8a70;"></div>
<div style="position:absolute;left:6px;top:883px;width:144px;height:17px;overflow:hidden;white-space:nowrap;font-size:15.5px;line-height:15px;padding-top:4px;font-weight:bold;color:#111;-webkit-text-stroke:0.25px #111;">22</div>
<div class="cn" style="left:153px;top:883px;height:18px"></div>
<div class="cn" style="left:197px;top:883px;height:18px"></div>
<div class="cn" style="left:241px;top:883px;height:18px"></div>
<div class="cn" style="left:285px;top:883px;height:18px"></div>
<div class="cn" style="left:329px;top:883px;height:18px"></div>
<div class="cw" style="left:373px;top:883px;height:18px"></div>
<div class="cw" style="left:417px;top:883px;height:18px"></div>
<div class="cn" style="left:461px;top:883px;height:18px"></div>
<div class="cn" style="left:505px;top:883px;height:18px"></div>
<div class="cn" style="left:549px;top:883px;height:18px"></div>
<div class="cn" style="left:593px;top:883px;height:18px"></div>
<div class="cn" style="left:637px;top:883px;height:18px"></div>
<div class="cw" style="left:681px;top:883px;height:18px"></div>
<div class="cw" style="left:725px;top:883px;height:18px"></div>
<div class="cn" style="left:769px;top:883px;height:18px"></div>
<div class="cn" style="left:813px;top:883px;height:18px"></div>
<div class="cn" style="left:857px;top:883px;height:18px"></div>
<div class="cn" style="left:901px;top:883px;height:18px"></div>
<div class="cn" style="left:945px;top:883px;height:18px"></div>
<div class="cw" style="left:989px;top:883px;height:18px"></div>
<div class="cw" style="left:1033px;top:883px;height:18px"></div>
<div class="cn" style="left:1077px;top:883px;height:18px"></div>
<div class="cn" style="left:1121px;top:883px;height:18px"></div>
<div class="cn" style="left:1165px;top:883px;height:18px"></div>
<div class="cn" style="left:1209px;top:883px;height:18px"></div>
<div class="cn" style="left:1253px;top:883px;height:18px"></div>
<div class="cw" style="left:1297px;top:883px;height:18px"></div>
<div class="cw" style="left:1341px;top:883px;height:18px"></div>
<div class="cn" style="left:1385px;top:883px;height:18px"></div>
<div class="cn" style="left:1429px;top:883px;height:18px"></div>
<div class="cn" style="left:1473px;top:883px;height:18px"></div>
<div class="cn" style="left:1517px;top:883px;height:18px"></div>
<div class="cn" style="left:1561px;top:883px;height:18px"></div>
<div class="cw" style="left:1605px;top:883px;height:18px"></div>
<div class="cw" style="left:1649px;top:883px;height:18px"></div>
<div style="position:absolute;left:3px;top:901px;width:150px;height:18px;background:#fff7a0;border-bottom:1px solid #8c8658;border-right:1px solid #8a8a70;"></div>
<div style="position:absolute;left:6px;top:901px;width:144px;height:17px;overflow:hidden;white-space:nowrap;font-size:15.5px;line-height:15px;padding-top:4px;font-weight:bold;color:#111;-webkit-text-stroke:0.25px #111;">21</div>
<div class="cn" style="left:153px;top:901px;height:18px"></div>
<div class="cn" style="left:197px;top:901px;height:18px"></div>
<div class="cn" style="left:241px;top:901px;height:18px"></div>
<div class="cn" style="left:285px;top:901px;height:18px"></div>
<div class="cn" style="left:329px;top:901px;height:18px"></div>
<div class="cw" style="left:373px;top:901px;height:18px"></div>
<div class="cw" style="left:417px;top:901px;height:18px"></div>
<div class="cn" style="left:461px;top:901px;height:18px"></div>
<div class="cn" style="left:505px;top:901px;height:18px"></div>
<div class="cn" style="left:549px;top:901px;height:18px"></div>
<div class="cn" style="left:593px;top:901px;height:18px"></div>
<div class="cn" style="left:637px;top:901px;height:18px"></div>
<div class="cw" style="left:681px;top:901px;height:18px"></div>
<div class="cw" style="left:725px;top:901px;height:18px"></div>
<div class="cn" style="left:769px;top:901px;height:18px"></div>
<div class="cn" style="left:813px;top:901px;height:18px"></div>
<div class="cn" style="left:857px;top:901px;height:18px"></div>
<div class="cn" style="left:901px;top:901px;height:18px"></div>
<div class="cn" style="left:945px;top:901px;height:18px"></div>
<div class="cw" style="left:989px;top:901px;height:18px"></div>
<div class="cw" style="left:1033px;top:901px;height:18px"></div>
<div class="cn" style="left:1077px;top:901px;height:18px"></div>
<div class="cn" style="left:1121px;top:901px;height:18px"></div>
<div class="cn" style="left:1165px;top:901px;height:18px"></div>
<div class="cn" style="left:1209px;top:901px;height:18px"></div>
<div class="cn" style="left:1253px;top:901px;height:18px"></div>
<div class="cw" style="left:1297px;top:901px;height:18px"></div>
<div class="cw" style="left:1341px;top:901px;height:18px"></div>
<div class="cn" style="left:1385px;top:901px;height:18px"></div>
<div class="cn" style="left:1429px;top:901px;height:18px"></div>
<div class="cn" style="left:1473px;top:901px;height:18px"></div>
<div class="cn" style="left:1517px;top:901px;height:18px"></div>
<div class="cn" style="left:1561px;top:901px;height:18px"></div>
<div class="cw" style="left:1605px;top:901px;height:18px"></div>
<div class="cw" style="left:1649px;top:901px;height:18px"></div>
<div style="position:absolute;left:3px;top:919px;width:150px;height:18px;background:#fff7a0;border-bottom:1px solid #8c8658;border-right:1px solid #8a8a70;"></div>
<div style="position:absolute;left:6px;top:919px;width:144px;height:17px;overflow:hidden;white-space:nowrap;font-size:15.5px;line-height:15px;padding-top:4px;font-weight:bold;color:#111;-webkit-text-stroke:0.25px #111;">20</div>
<div class="cn" style="left:153px;top:919px;height:18px"></div>
<div class="cn" style="left:197px;top:919px;height:18px"></div>
<div class="cn" style="left:241px;top:919px;height:18px"></div>
<div class="cn" style="left:285px;top:919px;height:18px"></div>
<div class="cn" style="left:329px;top:919px;height:18px"></div>
<div class="cw" style="left:373px;top:919px;height:18px"></div>
<div class="cw" style="left:417px;top:919px;height:18px"></div>
<div class="cn" style="left:461px;top:919px;height:18px"></div>
<div class="cn" style="left:505px;top:919px;height:18px"></div>
<div class="cn" style="left:549px;top:919px;height:18px"></div>
<div class="cn" style="left:593px;top:919px;height:18px"></div>
<div class="cn" style="left:637px;top:919px;height:18px"></div>
<div class="cw" style="left:681px;top:919px;height:18px"></div>
<div class="cw" style="left:725px;top:919px;height:18px"></div>
<div class="cn" style="left:769px;top:919px;height:18px"></div>
<div class="cn" style="left:813px;top:919px;height:18px"></div>
<div class="cn" style="left:857px;top:919px;height:18px"></div>
<div class="cn" style="left:901px;top:919px;height:18px"></div>
<div class="cn" style="left:945px;top:919px;height:18px"></div>
<div class="cw" style="left:989px;top:919px;height:18px"></div>
<div class="cw" style="left:1033px;top:919px;height:18px"></div>
<div class="cn" style="left:1077px;top:919px;height:18px"></div>
<div class="cn" style="left:1121px;top:919px;height:18px"></div>
<div class="cn" style="left:1165px;top:919px;height:18px"></div>
<div class="cn" style="left:1209px;top:919px;height:18px"></div>
<div class="cn" style="left:1253px;top:919px;height:18px"></div>
<div class="cw" style="left:1297px;top:919px;height:18px"></div>
<div class="cw" style="left:1341px;top:919px;height:18px"></div>
<div class="cn" style="left:1385px;top:919px;height:18px"></div>
<div class="cn" style="left:1429px;top:919px;height:18px"></div>
<div class="cn" style="left:1473px;top:919px;height:18px"></div>
<div class="cn" style="left:1517px;top:919px;height:18px"></div>
<div class="cn" style="left:1561px;top:919px;height:18px"></div>
<div class="cw" style="left:1605px;top:919px;height:18px"></div>
<div class="cw" style="left:1649px;top:919px;height:18px"></div>
<div style="position:absolute;left:3px;top:937px;width:150px;height:18px;background:#fff7a0;border-bottom:1px solid #8c8658;border-right:1px solid #8a8a70;"></div>
<div style="position:absolute;left:6px;top:937px;width:144px;height:17px;overflow:hidden;white-space:nowrap;font-size:15.5px;line-height:15px;padding-top:4px;font-weight:bold;color:#111;-webkit-text-stroke:0.25px #111;">19</div>
<div class="cn" style="left:153px;top:937px;height:18px"></div>
<div class="cn" style="left:197px;top:937px;height:18px"></div>
<div class="cn" style="left:241px;top:937px;height:18px"></div>
<div class="cn" style="left:285px;top:937px;height:18px"></div>
<div class="cn" style="left:329px;top:937px;height:18px"></div>
<div class="cw" style="left:373px;top:937px;height:18px"></div>
<div class="cw" style="left:417px;top:937px;height:18px"></div>
<div class="cn" style="left:461px;top:937px;height:18px"></div>
<div class="cn" style="left:505px;top:937px;height:18px"></div>
<div class="cn" style="left:549px;top:937px;height:18px"></div>
<div class="cn" style="left:593px;top:937px;height:18px"></div>
<div class="cn" style="left:637px;top:937px;height:18px"></div>
<div class="cw" style="left:681px;top:937px;height:18px"></div>
<div class="cw" style="left:725px;top:937px;height:18px"></div>
<div class="cn" style="left:769px;top:937px;height:18px"></div>
<div class="cn" style="left:813px;top:937px;height:18px"></div>
<div class="cn" style="left:857px;top:937px;height:18px"></div>
<div class="cn" style="left:901px;top:937px;height:18px"></div>
<div class="cn" style="left:945px;top:937px;height:18px"></div>
<div class="cw" style="left:989px;top:937px;height:18px"></div>
<div class="cw" style="left:1033px;top:937px;height:18px"></div>
<div class="cn" style="left:1077px;top:937px;height:18px"></div>
<div class="cn" style="left:1121px;top:937px;height:18px"></div>
<div class="cn" style="left:1165px;top:937px;height:18px"></div>
<div class="cn" style="left:1209px;top:937px;height:18px"></div>
<div class="cn" style="left:1253px;top:937px;height:18px"></div>
<div class="cw" style="left:1297px;top:937px;height:18px"></div>
<div class="cw" style="left:1341px;top:937px;height:18px"></div>
<div class="cn" style="left:1385px;top:937px;height:18px"></div>
<div class="cn" style="left:1429px;top:937px;height:18px"></div>
<div class="cn" style="left:1473px;top:937px;height:18px"></div>
<div class="cn" style="left:1517px;top:937px;height:18px"></div>
<div class="cn" style="left:1561px;top:937px;height:18px"></div>
<div class="cw" style="left:1605px;top:937px;height:18px"></div>
<div class="cw" style="left:1649px;top:937px;height:18px"></div>
<div style="position:absolute;left:3px;top:955px;width:150px;height:18px;background:#fff7a0;border-bottom:1px solid #8c8658;border-right:1px solid #8a8a70;"></div>
<div style="position:absolute;left:6px;top:955px;width:144px;height:17px;overflow:hidden;white-space:nowrap;font-size:15.5px;line-height:15px;padding-top:4px;font-weight:bold;color:#111;-webkit-text-stroke:0.25px #111;">18</div>
<div class="cn" style="left:153px;top:955px;height:18px"></div>
<div class="cn" style="left:197px;top:955px;height:18px"></div>
<div class="cn" style="left:241px;top:955px;height:18px"></div>
<div class="cn" style="left:285px;top:955px;height:18px"></div>
<div class="cn" style="left:329px;top:955px;height:18px"></div>
<div class="cw" style="left:373px;top:955px;height:18px"></div>
<div class="cw" style="left:417px;top:955px;height:18px"></div>
<div class="cn" style="left:461px;top:955px;height:18px"></div>
<div class="cn" style="left:505px;top:955px;height:18px"></div>
<div class="cn" style="left:549px;top:955px;height:18px"></div>
<div class="cn" style="left:593px;top:955px;height:18px"></div>
<div class="cn" style="left:637px;top:955px;height:18px"></div>
<div class="cw" style="left:681px;top:955px;height:18px"></div>
<div class="cw" style="left:725px;top:955px;height:18px"></div>
<div class="cn" style="left:769px;top:955px;height:18px"></div>
<div class="cn" style="left:813px;top:955px;height:18px"></div>
<div class="cn" style="left:857px;top:955px;height:18px"></div>
<div class="cn" style="left:901px;top:955px;height:18px"></div>
<div class="cn" style="left:945px;top:955px;height:18px"></div>
<div class="cw" style="left:989px;top:955px;height:18px"></div>
<div class="cw" style="left:1033px;top:955px;height:18px"></div>
<div class="cn" style="left:1077px;top:955px;height:18px"></div>
<div class="cn" style="left:1121px;top:955px;height:18px"></div>
<div class="cn" style="left:1165px;top:955px;height:18px"></div>
<div class="cn" style="left:1209px;top:955px;height:18px"></div>
<div class="cn" style="left:1253px;top:955px;height:18px"></div>
<div class="cw" style="left:1297px;top:955px;height:18px"></div>
<div class="cw" style="left:1341px;top:955px;height:18px"></div>
<div class="cn" style="left:1385px;top:955px;height:18px"></div>
<div class="cn" style="left:1429px;top:955px;height:18px"></div>
<div class="cn" style="left:1473px;top:955px;height:18px"></div>
<div class="cn" style="left:1517px;top:955px;height:18px"></div>
<div class="cn" style="left:1561px;top:955px;height:18px"></div>
<div class="cw" style="left:1605px;top:955px;height:18px"></div>
<div class="cw" style="left:1649px;top:955px;height:18px"></div>
<div style="position:absolute;left:129px;top:793px;width:23px;height:2px;background:#1a1ad0;"></div>
<div style="position:absolute;left:35px;top:523px;width:60px;height:2px;background:#1a1ad0;"></div>
<div style="position:absolute;left:146px;top:524px;width:0;height:0;border-left:6px solid transparent;border-top:6px solid #e81010;"></div>
<div style="position:absolute;left:146px;top:542px;width:0;height:0;border-left:6px solid transparent;border-top:6px solid #e81010;"></div>
<div style="position:absolute;left:146px;top:560px;width:0;height:0;border-left:6px solid transparent;border-top:6px solid #e81010;"></div>
<div style="position:absolute;left:146px;top:578px;width:0;height:0;border-left:6px solid transparent;border-top:6px solid #e81010;"></div>
<div style="position:absolute;left:146px;top:596px;width:0;height:0;border-left:6px solid transparent;border-top:6px solid #e81010;"></div>
<div style="position:absolute;left:146px;top:614px;width:0;height:0;border-left:6px solid transparent;border-top:6px solid #e81010;"></div>
<div style="position:absolute;left:146px;top:632px;width:0;height:0;border-left:6px solid transparent;border-top:6px solid #e81010;"></div>
<div style="position:absolute;left:146px;top:650px;width:0;height:0;border-left:6px solid transparent;border-top:6px solid #e81010;"></div>
<div style="position:absolute;left:146px;top:686px;width:0;height:0;border-left:6px solid transparent;border-top:6px solid #e81010;"></div>
<div style="position:absolute;left:146px;top:721px;width:0;height:0;border-left:6px solid transparent;border-top:6px solid #e81010;"></div>
<div style="position:absolute;left:153px;top:524px;width:44px;height:18px;background:#0c3e88;border-right:1px solid #9cc4ec;border-bottom:1px solid #9cc4ec;"></div>
<div style="position:absolute;left:152px;top:529px;width:43px;text-align:right;font-size:11px;line-height:11px;letter-spacing:-0.4px;color:#fff;">100</div>
<div style="position:absolute;left:190px;top:524px;width:0;height:0;border-left:6px solid transparent;border-top:6px solid #e81010;"></div>
<div style="position:absolute;left:197px;top:524px;width:44px;height:18px;background:#0c3e88;border-right:1px solid #9cc4ec;border-bottom:1px solid #9cc4ec;"></div>
<div style="position:absolute;left:196px;top:529px;width:43px;text-align:right;font-size:11px;line-height:11px;letter-spacing:-0.4px;color:#fff;">100</div>
<div style="position:absolute;left:234px;top:524px;width:0;height:0;border-left:6px solid transparent;border-top:6px solid #e81010;"></div>
<div style="position:absolute;left:241px;top:524px;width:44px;height:18px;background:#0c3e88;border-right:1px solid #9cc4ec;border-bottom:1px solid #9cc4ec;"></div>
<div style="position:absolute;left:240px;top:529px;width:43px;text-align:right;font-size:11px;line-height:11px;letter-spacing:-0.4px;color:#fff;">100</div>
<div style="position:absolute;left:278px;top:524px;width:0;height:0;border-left:6px solid transparent;border-top:6px solid #e81010;"></div>
<div style="position:absolute;left:285px;top:524px;width:44px;height:18px;background:#0c3e88;border-right:1px solid #9cc4ec;border-bottom:1px solid #9cc4ec;"></div>
<div style="position:absolute;left:284px;top:529px;width:43px;text-align:right;font-size:11px;line-height:11px;letter-spacing:-0.4px;color:#fff;">100</div>
<div style="position:absolute;left:322px;top:524px;width:0;height:0;border-left:6px solid transparent;border-top:6px solid #e81010;"></div>
<div style="position:absolute;left:329px;top:524px;width:44px;height:18px;background:#0c3e88;border-right:1px solid #9cc4ec;border-bottom:1px solid #9cc4ec;"></div>
<div style="position:absolute;left:328px;top:529px;width:43px;text-align:right;font-size:11px;line-height:11px;letter-spacing:-0.4px;color:#fff;">100</div>
<div style="position:absolute;left:366px;top:524px;width:0;height:0;border-left:6px solid transparent;border-top:6px solid #e81010;"></div>
<div style="position:absolute;left:373px;top:524px;width:44px;height:18px;background:#0c3e88;border-right:1px solid #9cc4ec;border-bottom:1px solid #9cc4ec;"></div>
<div style="position:absolute;left:372px;top:529px;width:43px;text-align:right;font-size:11px;line-height:11px;letter-spacing:-0.4px;color:#fff;">100</div>
<div style="position:absolute;left:410px;top:524px;width:0;height:0;border-left:6px solid transparent;border-top:6px solid #e81010;"></div>
<div style="position:absolute;left:417px;top:524px;width:44px;height:18px;background:#0c3e88;border-right:1px solid #9cc4ec;border-bottom:1px solid #9cc4ec;"></div>
<div style="position:absolute;left:416px;top:529px;width:43px;text-align:right;font-size:11px;line-height:11px;letter-spacing:-0.4px;color:#fff;">100</div>
<div style="position:absolute;left:454px;top:524px;width:0;height:0;border-left:6px solid transparent;border-top:6px solid #e81010;"></div>
<div style="position:absolute;left:461px;top:524px;width:44px;height:18px;background:#0c3e88;border-right:1px solid #9cc4ec;border-bottom:1px solid #9cc4ec;"></div>
<div style="position:absolute;left:498px;top:524px;width:0;height:0;border-left:6px solid transparent;border-top:6px solid #e81010;"></div>
<div style="position:absolute;left:241px;top:542px;width:44px;height:18px;background:#ffffff;border-right:1px solid #dcdcc4;border-bottom:1px solid #dcdcc4;"></div>
<div style="position:absolute;left:240px;top:547px;width:43px;text-align:right;font-size:11px;line-height:11px;letter-spacing:-0.4px;color:#111;">100</div>
<div style="position:absolute;left:278px;top:542px;width:0;height:0;border-left:6px solid transparent;border-top:6px solid #e81010;"></div>
<div style="position:absolute;left:285px;top:542px;width:44px;height:18px;background:#ffffff;border-right:1px solid #dcdcc4;border-bottom:1px solid #dcdcc4;"></div>
<div style="position:absolute;left:284px;top:547px;width:43px;text-align:right;font-size:11px;line-height:11px;letter-spacing:-0.4px;color:#111;">100</div>
<div style="position:absolute;left:322px;top:542px;width:0;height:0;border-left:6px solid transparent;border-top:6px solid #e81010;"></div>
<div style="position:absolute;left:329px;top:542px;width:44px;height:18px;background:#ffffff;border-right:1px solid #dcdcc4;border-bottom:1px solid #dcdcc4;"></div>
<div style="position:absolute;left:328px;top:547px;width:43px;text-align:right;font-size:11px;line-height:11px;letter-spacing:-0.4px;color:#111;">20</div>
<div style="position:absolute;left:366px;top:542px;width:0;height:0;border-left:6px solid transparent;border-top:6px solid #e81010;"></div>
<div style="position:absolute;left:373px;top:542px;width:44px;height:18px;background:#ffffff;border-right:1px solid #dcdcc4;border-bottom:1px solid #dcdcc4;"></div>
<div style="position:absolute;left:372px;top:547px;width:43px;text-align:right;font-size:11px;line-height:11px;letter-spacing:-0.4px;color:#111;">20</div>
<div style="position:absolute;left:410px;top:542px;width:0;height:0;border-left:6px solid transparent;border-top:6px solid #e81010;"></div>
<div style="position:absolute;left:417px;top:542px;width:44px;height:18px;background:#ffffff;border-right:1px solid #dcdcc4;border-bottom:1px solid #dcdcc4;"></div>
<div style="position:absolute;left:416px;top:547px;width:43px;text-align:right;font-size:11px;line-height:11px;letter-spacing:-0.4px;color:#111;">20</div>
<div style="position:absolute;left:454px;top:542px;width:0;height:0;border-left:6px solid transparent;border-top:6px solid #e81010;"></div>
<div style="position:absolute;left:461px;top:542px;width:44px;height:18px;background:#ffffff;border-right:1px solid #dcdcc4;border-bottom:1px solid #dcdcc4;"></div>
<div style="position:absolute;left:460px;top:547px;width:43px;text-align:right;font-size:11px;line-height:11px;letter-spacing:-0.4px;color:#111;">20</div>
<div style="position:absolute;left:498px;top:542px;width:0;height:0;border-left:6px solid transparent;border-top:6px solid #e81010;"></div>
<div style="position:absolute;left:329px;top:560px;width:44px;height:18px;background:#0a0a82;border-right:1px solid #9cc4ec;border-bottom:1px solid #9cc4ec;"></div>
<div style="position:absolute;left:328px;top:565px;width:43px;text-align:right;font-size:11px;line-height:11px;letter-spacing:-0.4px;color:#fff;">20</div>
<div style="position:absolute;left:366px;top:560px;width:0;height:0;border-left:6px solid transparent;border-top:6px solid #e81010;"></div>
<div style="position:absolute;left:461px;top:560px;width:44px;height:18px;background:#0a0a82;border-right:1px solid #9cc4ec;border-bottom:1px solid #9cc4ec;"></div>
<div style="position:absolute;left:498px;top:560px;width:0;height:0;border-left:6px solid transparent;border-top:6px solid #e81010;"></div>
<div style="position:absolute;left:1429px;top:596px;width:44px;height:18px;background:#00f4f4;border-right:1px solid #8ae8e8;border-bottom:1px solid #8ae8e8;"></div>
<div style="position:absolute;left:1428px;top:601px;width:43px;text-align:right;font-size:11px;line-height:11px;letter-spacing:-0.4px;color:#111;">100</div>
<div style="position:absolute;left:1466px;top:596px;width:0;height:0;border-left:6px solid transparent;border-top:6px solid #e81010;"></div>
<div style="position:absolute;left:1473px;top:596px;width:44px;height:18px;background:#00f4f4;border-right:1px solid #8ae8e8;border-bottom:1px solid #8ae8e8;"></div>
<div style="position:absolute;left:1472px;top:601px;width:43px;text-align:right;font-size:11px;line-height:11px;letter-spacing:-0.4px;color:#111;">100</div>
<div style="position:absolute;left:1510px;top:596px;width:0;height:0;border-left:6px solid transparent;border-top:6px solid #e81010;"></div>
<div style="position:absolute;left:1517px;top:596px;width:44px;height:18px;background:#00f4f4;border-right:1px solid #8ae8e8;border-bottom:1px solid #8ae8e8;"></div>
<div style="position:absolute;left:1516px;top:601px;width:43px;text-align:right;font-size:11px;line-height:11px;letter-spacing:-0.4px;color:#111;">100</div>
<div style="position:absolute;left:1554px;top:596px;width:0;height:0;border-left:6px solid transparent;border-top:6px solid #e81010;"></div>
<div style="position:absolute;left:1561px;top:596px;width:44px;height:18px;background:#00f4f4;border-right:1px solid #8ae8e8;border-bottom:1px solid #8ae8e8;"></div>
<div style="position:absolute;left:1560px;top:601px;width:43px;text-align:right;font-size:11px;line-height:11px;letter-spacing:-0.4px;color:#111;">150</div>
<div style="position:absolute;left:1598px;top:596px;width:0;height:0;border-left:6px solid transparent;border-top:6px solid #e81010;"></div>
<div style="position:absolute;left:153px;top:614px;width:44px;height:18px;background:#f50a0a;border-right:1px solid #f59090;border-bottom:1px solid #f59090;"></div>
<div style="position:absolute;left:152px;top:619px;width:43px;text-align:right;font-size:11px;line-height:11px;letter-spacing:-0.4px;color:#fff;">150</div>
<div style="position:absolute;left:190px;top:614px;width:0;height:0;border-left:6px solid transparent;border-top:6px solid #e81010;"></div>
<div style="position:absolute;left:153px;top:632px;width:44px;height:18px;background:#f50a0a;border-right:1px solid #f59090;border-bottom:1px solid #f59090;"></div>
<div style="position:absolute;left:152px;top:637px;width:43px;text-align:right;font-size:11px;line-height:11px;letter-spacing:-0.4px;color:#fff;">100</div>
<div style="position:absolute;left:190px;top:632px;width:0;height:0;border-left:6px solid transparent;border-top:6px solid #e81010;"></div>
<div style="position:absolute;left:197px;top:614px;width:44px;height:18px;background:#f50a0a;border-right:1px solid #f59090;border-bottom:1px solid #f59090;"></div>
<div style="position:absolute;left:196px;top:619px;width:43px;text-align:right;font-size:11px;line-height:11px;letter-spacing:-0.4px;color:#fff;">150</div>
<div style="position:absolute;left:234px;top:614px;width:0;height:0;border-left:6px solid transparent;border-top:6px solid #e81010;"></div>
<div style="position:absolute;left:197px;top:632px;width:44px;height:18px;background:#f50a0a;border-right:1px solid #f59090;border-bottom:1px solid #f59090;"></div>
<div style="position:absolute;left:196px;top:637px;width:43px;text-align:right;font-size:11px;line-height:11px;letter-spacing:-0.4px;color:#fff;">100</div>
<div style="position:absolute;left:234px;top:632px;width:0;height:0;border-left:6px solid transparent;border-top:6px solid #e81010;"></div>
<div style="position:absolute;left:241px;top:614px;width:44px;height:18px;background:#f50a0a;border-right:1px solid #f59090;border-bottom:1px solid #f59090;"></div>
<div style="position:absolute;left:240px;top:619px;width:43px;text-align:right;font-size:11px;line-height:11px;letter-spacing:-0.4px;color:#fff;">150</div>
<div style="position:absolute;left:278px;top:614px;width:0;height:0;border-left:6px solid transparent;border-top:6px solid #e81010;"></div>
<div style="position:absolute;left:241px;top:632px;width:44px;height:18px;background:#f50a0a;border-right:1px solid #f59090;border-bottom:1px solid #f59090;"></div>
<div style="position:absolute;left:240px;top:637px;width:43px;text-align:right;font-size:11px;line-height:11px;letter-spacing:-0.4px;color:#fff;">100</div>
<div style="position:absolute;left:278px;top:632px;width:0;height:0;border-left:6px solid transparent;border-top:6px solid #e81010;"></div>
<div style="position:absolute;left:1429px;top:632px;width:44px;height:18px;background:#f50a0a;border-right:1px solid #f59090;border-bottom:1px solid #f59090;"></div>
<div style="position:absolute;left:1428px;top:637px;width:43px;text-align:right;font-size:11px;line-height:11px;letter-spacing:-0.4px;color:#fff;">150</div>
<div style="position:absolute;left:1466px;top:632px;width:0;height:0;border-left:6px solid transparent;border-top:6px solid #e81010;"></div>
<div style="position:absolute;left:153px;top:650px;width:44px;height:18px;background:#f00cf0;border-right:1px solid #f0a0f0;border-bottom:1px solid #f0a0f0;"></div>
<div style="position:absolute;left:152px;top:655px;width:43px;text-align:right;font-size:11px;line-height:11px;letter-spacing:-0.4px;color:#fff;">100</div>
<div style="position:absolute;left:190px;top:650px;width:0;height:0;border-left:6px solid transparent;border-top:6px solid #e81010;"></div>
<div style="position:absolute;left:1429px;top:650px;width:44px;height:18px;background:#f00cf0;border-right:1px solid #f0a0f0;border-bottom:1px solid #f0a0f0;"></div>
<div style="position:absolute;left:1428px;top:655px;width:43px;text-align:right;font-size:11px;line-height:11px;letter-spacing:-0.4px;color:#fff;">100</div>
<div style="position:absolute;left:1466px;top:650px;width:0;height:0;border-left:6px solid transparent;border-top:6px solid #e81010;"></div>
<div style="position:absolute;left:153px;top:686px;width:44px;height:17px;background:#f5803e;border-bottom:1px solid #f8c8a8;"></div>
<div style="position:absolute;left:152px;top:686px;width:41px;height:16px;overflow:hidden;text-align:right;font-size:17px;line-height:17px;padding-top:4px;color:#fde6d6;">1</div>
<div style="position:absolute;left:190px;top:686px;width:0;height:0;border-left:6px solid transparent;border-top:6px solid #e81010;"></div>
<div style="position:absolute;left:373px;top:686px;width:44px;height:17px;background:#f5803e;border-bottom:1px solid #f8c8a8;"></div>
<div style="position:absolute;left:372px;top:686px;width:41px;height:16px;overflow:hidden;text-align:right;font-size:17px;line-height:17px;padding-top:4px;color:#fde6d6;">3</div>
<div style="position:absolute;left:410px;top:686px;width:0;height:0;border-left:6px solid transparent;border-top:6px solid #e81010;"></div>
<div style="position:absolute;left:153px;top:721px;width:44px;height:18px;background:#f5803e;border-bottom:1px solid #f8c8a8;"></div>
<div style="position:absolute;left:152px;top:721px;width:41px;height:17px;overflow:hidden;text-align:right;font-size:17px;line-height:17px;padding-top:4px;color:#fde6d6;">2</div>
<div style="position:absolute;left:190px;top:721px;width:0;height:0;border-left:6px solid transparent;border-top:6px solid #e81010;"></div>
<div style="position:absolute;left:373px;top:721px;width:44px;height:18px;background:#f5803e;border-bottom:1px solid #f8c8a8;"></div>
<div style="position:absolute;left:372px;top:721px;width:41px;height:17px;overflow:hidden;text-align:right;font-size:17px;line-height:17px;padding-top:4px;color:#fde6d6;">4</div>
<div style="position:absolute;left:410px;top:721px;width:0;height:0;border-left:6px solid transparent;border-top:6px solid #e81010;"></div>
<div style="position:absolute;left:593px;top:721px;width:44px;height:18px;background:#f5803e;border-bottom:1px solid #f8c8a8;"></div>
<div style="position:absolute;left:592px;top:721px;width:41px;height:17px;overflow:hidden;text-align:right;font-size:17px;line-height:17px;padding-top:4px;color:#fde6d6;">6</div>
<div style="position:absolute;left:630px;top:721px;width:0;height:0;border-left:6px solid transparent;border-top:6px solid #e81010;"></div>
<div style="position:absolute;left:813px;top:721px;width:44px;height:18px;background:#f5803e;border-bottom:1px solid #f8c8a8;"></div>
<div style="position:absolute;left:812px;top:721px;width:41px;height:17px;overflow:hidden;text-align:right;font-size:17px;line-height:17px;padding-top:4px;color:#fde6d6;">8</div>
<div style="position:absolute;left:850px;top:721px;width:0;height:0;border-left:6px solid transparent;border-top:6px solid #e81010;"></div>
<div style="position:absolute;left:1649px;top:703px;width:44px;height:18px;background:#f5803e;border-bottom:1px solid #f8c8a8;"></div>
<div style="position:absolute;left:1648px;top:703px;width:41px;height:17px;overflow:hidden;text-align:right;font-size:17px;line-height:17px;padding-top:4px;color:#fde6d6;"></div>
<div style="position:absolute;left:1686px;top:703px;width:0;height:0;border-left:6px solid transparent;border-top:6px solid #e81010;"></div>
<div style="position:absolute;left:153px;top:757px;width:44px;height:18px;background:#c0ec78;border-bottom:1px solid #dcdcc4;"></div>
<div style="position:absolute;left:167px;top:759px;width:16px;height:14px"><svg width="16" height="14" viewBox="0 0 16 14"><path d="M5 4 V2 Q5 0.5 8 0.5 Q11 0.5 11 2 V4" fill="none" stroke="#223" stroke-width="1.2"/><rect x="1" y="4" width="14" height="9.5" rx="1" fill="#5a6a88" stroke="#223"/><circle cx="8" cy="8.7" r="3.2" fill="#111" stroke="#ccd" stroke-width="1"/><rect x="2" y="5" width="3" height="2" fill="#aab"/></svg></div>
<div style="position:absolute;left:373px;top:757px;width:44px;height:18px;background:#c0ec78;border-bottom:1px solid #dcdcc4;"></div>
<div style="position:absolute;left:387px;top:759px;width:16px;height:14px"><svg width="16" height="14" viewBox="0 0 16 14"><path d="M5 4 V2 Q5 0.5 8 0.5 Q11 0.5 11 2 V4" fill="none" stroke="#223" stroke-width="1.2"/><rect x="1" y="4" width="14" height="9.5" rx="1" fill="#5a6a88" stroke="#223"/><circle cx="8" cy="8.7" r="3.2" fill="#111" stroke="#ccd" stroke-width="1"/><rect x="2" y="5" width="3" height="2" fill="#aab"/></svg></div>
<div style="position:absolute;left:593px;top:757px;width:44px;height:18px;background:#c0ec78;border-bottom:1px solid #dcdcc4;"></div>
<div style="position:absolute;left:607px;top:759px;width:16px;height:14px"><svg width="16" height="14" viewBox="0 0 16 14"><path d="M5 4 V2 Q5 0.5 8 0.5 Q11 0.5 11 2 V4" fill="none" stroke="#223" stroke-width="1.2"/><rect x="1" y="4" width="14" height="9.5" rx="1" fill="#5a6a88" stroke="#223"/><circle cx="8" cy="8.7" r="3.2" fill="#111" stroke="#ccd" stroke-width="1"/><rect x="2" y="5" width="3" height="2" fill="#aab"/></svg></div>
<div style="position:absolute;left:827px;top:759px;width:16px;height:14px"><svg width="16" height="14" viewBox="0 0 16 14"><path d="M5 4 V2 Q5 0.5 8 0.5 Q11 0.5 11 2 V4" fill="none" stroke="#223" stroke-width="1.2"/><rect x="1" y="4" width="14" height="9.5" rx="1" fill="#5a6a88" stroke="#223"/><circle cx="8" cy="8.7" r="3.2" fill="#111" stroke="#ccd" stroke-width="1"/><rect x="2" y="5" width="3" height="2" fill="#aab"/></svg></div>
<div style="position:absolute;left:152px;top:793px;width:44px;height:17px;overflow:hidden;text-align:center;font-size:16.5px;line-height:17px;padding-top:5px;color:#111;">5</div>
<div style="position:absolute;left:372px;top:793px;width:44px;height:17px;overflow:hidden;text-align:center;font-size:16.5px;line-height:17px;padding-top:5px;color:#111;">10</div>
<div style="position:absolute;left:592px;top:793px;width:44px;height:17px;overflow:hidden;text-align:center;font-size:16.5px;line-height:17px;padding-top:5px;color:#111;">25</div>
<div style="position:absolute;left:812px;top:793px;width:44px;height:17px;overflow:hidden;text-align:center;font-size:16.5px;line-height:17px;padding-top:5px;color:#111;">25</div>
<div style="position:absolute;left:152px;top:811px;width:44px;height:17px;overflow:hidden;text-align:center;font-size:16.5px;line-height:17px;padding-top:5px;color:#111;">26</div>
<div style="position:absolute;left:372px;top:811px;width:44px;height:17px;overflow:hidden;text-align:center;font-size:16.5px;line-height:17px;padding-top:5px;color:#111;">27</div>
<div style="position:absolute;left:592px;top:811px;width:44px;height:17px;overflow:hidden;text-align:center;font-size:16.5px;line-height:17px;padding-top:5px;color:#111;">51</div>
<div style="position:absolute;left:812px;top:811px;width:44px;height:17px;overflow:hidden;text-align:center;font-size:16.5px;line-height:17px;padding-top:5px;color:#111;">38</div>
<div style="position:absolute;left:152px;top:829px;width:44px;height:17px;overflow:hidden;text-align:center;font-size:16.5px;line-height:17px;padding-top:5px;color:#111;">19</div>
<div style="position:absolute;left:372px;top:829px;width:44px;height:17px;overflow:hidden;text-align:center;font-size:16.5px;line-height:17px;padding-top:5px;color:#111;">20</div>
<div style="position:absolute;left:593px;top:829px;width:44px;height:18px;background:#b6c8ec;border-bottom:1px solid #dcdcc4;"></div>
<div style="position:absolute;left:592px;top:829px;width:44px;height:17px;overflow:hidden;text-align:center;font-size:16.5px;line-height:17px;padding-top:5px;color:#111;">&gt;22</div>
<div style="position:absolute;left:812px;top:829px;width:44px;height:17px;overflow:hidden;text-align:center;font-size:16.5px;line-height:17px;padding-top:5px;color:#111;">22</div>
<div style="position:absolute;left:152px;top:847px;width:44px;height:17px;overflow:hidden;text-align:center;font-size:16.5px;line-height:17px;padding-top:5px;color:#111;">19</div>
<div style="position:absolute;left:372px;top:847px;width:44px;height:17px;overflow:hidden;text-align:center;font-size:16.5px;line-height:17px;padding-top:5px;color:#111;">18</div>
<div style="position:absolute;left:592px;top:847px;width:44px;height:17px;overflow:hidden;text-align:center;font-size:16.5px;line-height:17px;padding-top:5px;color:#111;">&gt;22</div>
<div style="position:absolute;left:812px;top:847px;width:44px;height:17px;overflow:hidden;text-align:center;font-size:16.5px;line-height:17px;padding-top:5px;color:#111;">&gt;22</div>
<div style="position:absolute;left:152px;top:865px;width:44px;height:17px;overflow:hidden;text-align:center;font-size:16.5px;line-height:17px;padding-top:5px;color:#a8a8a8;">0-0</div>
<div style="position:absolute;left:372px;top:865px;width:44px;height:17px;overflow:hidden;text-align:center;font-size:16.5px;line-height:17px;padding-top:5px;color:#a8a8a8;">0-0</div>
<div style="position:absolute;left:592px;top:865px;width:44px;height:17px;overflow:hidden;text-align:center;font-size:16.5px;line-height:17px;padding-top:5px;color:#111;">3-4</div>
<div style="position:absolute;left:812px;top:865px;width:44px;height:17px;overflow:hidden;text-align:center;font-size:16.5px;line-height:17px;padding-top:5px;color:#111;">4-0</div>
<div style="position:absolute;left:152px;top:883px;width:44px;height:17px;overflow:hidden;text-align:center;font-size:16.5px;line-height:17px;padding-top:5px;color:#a8a8a8;">0-0</div>
<div style="position:absolute;left:372px;top:883px;width:44px;height:17px;overflow:hidden;text-align:center;font-size:16.5px;line-height:17px;padding-top:5px;color:#a8a8a8;">0-0</div>
<div style="position:absolute;left:592px;top:883px;width:44px;height:17px;overflow:hidden;text-align:center;font-size:16.5px;line-height:17px;padding-top:5px;color:#111;">2-3</div>
<div style="position:absolute;left:812px;top:883px;width:44px;height:17px;overflow:hidden;text-align:center;font-size:16.5px;line-height:17px;padding-top:5px;color:#111;">3-2</div>
<div style="position:absolute;left:152px;top:901px;width:44px;height:17px;overflow:hidden;text-align:center;font-size:16.5px;line-height:17px;padding-top:5px;color:#a8a8a8;">0-0</div>
<div style="position:absolute;left:372px;top:901px;width:44px;height:17px;overflow:hidden;text-align:center;font-size:16.5px;line-height:17px;padding-top:5px;color:#a8a8a8;">0-0</div>
<div style="position:absolute;left:592px;top:901px;width:44px;height:17px;overflow:hidden;text-align:center;font-size:16.5px;line-height:17px;padding-top:5px;color:#111;">2-2</div>
<div style="position:absolute;left:812px;top:901px;width:44px;height:17px;overflow:hidden;text-align:center;font-size:16.5px;line-height:17px;padding-top:5px;color:#111;">3-2</div>
<div style="position:absolute;left:152px;top:919px;width:44px;height:17px;overflow:hidden;text-align:center;font-size:16.5px;line-height:17px;padding-top:5px;color:#a8a8a8;">0-0</div>
<div style="position:absolute;left:372px;top:919px;width:44px;height:17px;overflow:hidden;text-align:center;font-size:16.5px;line-height:17px;padding-top:5px;color:#111;">0-3</div>
<div style="position:absolute;left:592px;top:919px;width:44px;height:17px;overflow:hidden;text-align:center;font-size:16.5px;line-height:17px;padding-top:5px;color:#111;">1-5</div>
<div style="position:absolute;left:812px;top:919px;width:44px;height:17px;overflow:hidden;text-align:center;font-size:16.5px;line-height:17px;padding-top:5px;color:#111;">2-3</div>
<div style="position:absolute;left:152px;top:937px;width:44px;height:17px;overflow:hidden;text-align:center;font-size:16.5px;line-height:17px;padding-top:5px;color:#111;">2-3</div>
<div style="position:absolute;left:372px;top:937px;width:44px;height:17px;overflow:hidden;text-align:center;font-size:16.5px;line-height:17px;padding-top:5px;color:#111;">0-3</div>
<div style="position:absolute;left:592px;top:937px;width:44px;height:17px;overflow:hidden;text-align:center;font-size:16.5px;line-height:17px;padding-top:5px;color:#111;">4-2</div>
<div style="position:absolute;left:812px;top:937px;width:44px;height:17px;overflow:hidden;text-align:center;font-size:16.5px;line-height:17px;padding-top:5px;color:#111;">2-1</div>
<div style="position:absolute;left:152px;top:955px;width:44px;height:17px;overflow:hidden;text-align:center;font-size:16.5px;line-height:17px;padding-top:5px;color:#111;">4-0</div>
<div style="position:absolute;left:372px;top:955px;width:44px;height:17px;overflow:hidden;text-align:center;font-size:16.5px;line-height:17px;padding-top:5px;color:#111;">4-0</div>
<div style="position:absolute;left:592px;top:955px;width:44px;height:17px;overflow:hidden;text-align:center;font-size:16.5px;line-height:17px;padding-top:5px;color:#111;">1-3</div>
<div style="position:absolute;left:812px;top:955px;width:44px;height:17px;overflow:hidden;text-align:center;font-size:16.5px;line-height:17px;padding-top:5px;color:#111;">3-0</div>
<div style="position:absolute;left:477px;top:288px;width:954px;height:436px;background:#fff;border:1px solid #a8a8a8;border-radius:9px;box-shadow:0 18px 45px rgba(0,0,0,0.30),0 2px 8px rgba(0,0,0,0.12);overflow:hidden;">
<div style="position:absolute;left:0;top:0;width:100%;height:30px;background:#f2f2f2;"></div>
</div>
<div style="position:absolute;left:482px;top:296px;white-space:nowrap;font-size:14.5px;line-height:15px;color:#808080;">eco Follicoli di Demo, Donna (DD68)</div>
<svg style="position:absolute;left:1402px;top:296px" width="14" height="14" viewBox="0 0 14 14"><path d="M1 1 L13 13 M13 1 L1 13" stroke="#777" stroke-width="1.1"/></svg>
<div style="position:absolute;left:486px;top:329px;white-space:nowrap;font-size:12px;line-height:12px;color:#1c1c6a">Data</div>
<div style="position:absolute;left:486px;top:356px;white-space:nowrap;font-size:12px;line-height:12px;color:#1c1c6a">Eseguito da</div>
<div style="position:absolute;left:588px;top:324px;width:100px;height:22px;background:#e6e6e6;border:1px solid #dadada;"></div>
<div style="position:absolute;left:591px;top:329px;white-space:nowrap;font-size:12px;font-weight:bold;line-height:12px;color:#777;">06/06/2019</div>
<svg style="position:absolute;left:674px;top:332px" width="11" height="6" viewBox="0 0 11 6"><path d="M1 1 L5.5 5 L10 1" fill="none" stroke="#aaa" stroke-width="1"/></svg>
<div style="position:absolute;left:692px;top:324px;width:94px;height:23px;background:#fff;border:1px solid #d8d8d8;border-bottom:1px solid #7a7a7a;"></div>
<div style="position:absolute;left:695px;top:329px;white-space:nowrap;font-size:12.5px;font-weight:bold;line-height:12px;color:#111;">00:00:00</div>
<div style="position:absolute;left:769px;top:326px;width:16px;height:9px;background:linear-gradient(#fafafa,#e4e4e4);border:1px solid #b0b0b0;"></div>
<div style="position:absolute;left:769px;top:336px;width:16px;height:9px;background:linear-gradient(#fafafa,#e4e4e4);border:1px solid #b0b0b0;"></div>
<svg style="position:absolute;left:773px;top:328px" width="8" height="16" viewBox="0 0 8 16"><path d="M0.5 5 L4 1 L7.5 5Z M0.5 11 L4 15 L7.5 11Z" fill="#111"/></svg>
<div style="position:absolute;left:588px;top:351px;width:198px;height:23px;background:#fff;border:1px solid #d8d8d8;border-bottom:1px solid #7a7a7a;"></div>
<div style="position:absolute;left:591px;top:356px;white-space:nowrap;font-size:12.5px;font-weight:bold;line-height:12px;color:#111;">ivf, ivf</div>
<svg style="position:absolute;left:773px;top:360px" width="11" height="6" viewBox="0 0 11 6"><path d="M1 1 L5.5 5 L10 1" fill="none" stroke="#666" stroke-width="1"/></svg>
<div style="position:absolute;left:795px;top:329px"><svg width="15" height="13" viewBox="0 0 15 13"><path d="M1.5 12.5 L5 5 L8 8 L13.5 0.8 L11.5 7.5 L10 10 L7 7.2 L3 12.5Z" fill="#555" opacity=".6" transform="translate(0.8,0.8)"/><path d="M1 11.5 L4.5 4.5 L7.5 7.5 L13 0.5 L10.5 8.5 L7 5.8 L2.5 11.5Z" fill="#f4ec30" stroke="#6a6a20" stroke-width=".7"/></svg></div>
<div style="position:absolute;left:795px;top:355px"><svg width="15" height="13" viewBox="0 0 15 13"><path d="M1.5 12.5 L5 5 L8 8 L13.5 0.8 L11.5 7.5 L10 10 L7 7.2 L3 12.5Z" fill="#555" opacity=".6" transform="translate(0.8,0.8)"/><path d="M1 11.5 L4.5 4.5 L7.5 7.5 L13 0.5 L10.5 8.5 L7 5.8 L2.5 11.5Z" fill="#f4ec30" stroke="#6a6a20" stroke-width=".7"/></svg></div>
<div style="position:absolute;left:1352px;top:334px;width:56px;height:36px;background:linear-gradient(#fff,#f4f4f4);border:1px solid #c8c8c8;border-radius:4px;"></div>
<div style="position:absolute;left:1409px;top:334px;width:12px;height:36px;background:linear-gradient(#fff,#f4f4f4);border:1px solid #c8c8c8;border-radius:3px;"></div>
<svg style="position:absolute;left:1412px;top:351px" width="7" height="4" viewBox="0 0 7 4"><path d="M0 0 H7 L3.5 4Z" fill="#111"/></svg>
<svg style="position:absolute;left:1355px;top:338px" width="52" height="28" viewBox="0 0 52 28">
<ellipse cx="9" cy="11" rx="10" ry="10.5" fill="#28288a"/>
<path d="M7 9 Q12 6 16 9 Q17 12 17 14 L19 17 L17 18 L17.5 20.5 L15 21.5 L14 23 L15 27 L3 27 L6 23 Q3 17 7 9Z" fill="#ececf4" stroke="#28288a" stroke-width="1"/>
<circle cx="13" cy="13" r=".9" fill="#28288a"/><ellipse cx="18" cy="10" rx="10" ry="10.5" fill="#28288a"/>
<path d="M16 8 Q21 5 25 8 Q26 11 26 13 L28 16 L26 17 L26.5 19.5 L24 20.5 L23 22 L24 26 L12 26 L15 22 Q12 16 16 8Z" fill="#ececf4" stroke="#28288a" stroke-width="1"/>
<circle cx="22" cy="12" r=".9" fill="#28288a"/>
<path d="M40 5 L40 13 L34 24 Q33 27 36 27 L48 27 Q51 27 50 24 L44 13 L44 5Z" fill="#fff" stroke="#28288a" stroke-width="1.3"/>
<path d="M36 19 L48 19 L50 25 Q50 26.5 48 26.5 L36 26.5 Q34 26.5 34.5 25Z" fill="#2a2ae8"/>
<path d="M34 7 L50 25" stroke="#a81840" stroke-width="3.2"/>
<path d="M32 4 L36 2 L38 6 L34 8Z" fill="#fff" stroke="#28288a" stroke-width="1"/>
<rect x="39" y="2" width="6" height="3" fill="#9ab" stroke="#28288a" stroke-width=".8"/>
<circle cx="32" cy="17" r="2.2" fill="none" stroke="#7cba6a" stroke-width="1"/><circle cx="49" cy="6" r="1.8" fill="none" stroke="#7cba6a" stroke-width="1"/>
</svg>
<div style="position:absolute;left:519px;top:382px;width:227px;height:248px;background:#fff;border:1px solid #6a6a6a;"></div>
<div style="position:absolute;left:524px;top:388px;white-space:nowrap;font-size:12px;line-height:12px;color:#1c1c6a;">Ovaio Dx</div>
<svg style="position:absolute;left:519px;top:382px" width="227" height="248" viewBox="0 0 227 248"><defs><pattern id="cp519" x="2.50" y="25" width="14.72" height="15" patternUnits="userSpaceOnUse"><rect width="12.5" height="11.5" fill="#fffde4"/><rect y="11.5" width="12.5" height="3" fill="#edeadb"/></pattern></defs><rect x="2.50" y="25" width="218.60" height="225" fill="url(#cp519)"/><rect x="2.5" y="25.5" width="12" height="11.5" fill="#00007e"/><rect x="17.2" y="25.5" width="12" height="11.5" fill="#00007e"/><rect x="31.9" y="25.5" width="12" height="11.5" fill="#00007e"/><rect x="2.5" y="40.5" width="12" height="11.5" fill="#00007e"/><rect x="17.2" y="40.5" width="12" height="11.5" fill="#00007e"/><rect x="2.5" y="55.5" width="12" height="11.5" fill="#00007e"/><rect x="17.2" y="55.5" width="12" height="11.5" fill="#00007e"/><rect x="2.5" y="70.5" width="12" height="11.5" fill="#00007e"/><rect x="2.5" y="85.5" width="12" height="11.5" fill="#00007e"/><rect x="17.2" y="85.5" width="12" height="11.5" fill="#00007e"/><rect x="31.9" y="85.5" width="12" height="11.5" fill="#00007e"/><rect x="46.7" y="85.5" width="12" height="11.5" fill="#00007e"/><rect x="2.5" y="100.5" width="12" height="11.5" fill="#00007e"/><rect x="2.5" y="115.5" width="12" height="11.5" fill="#00007e"/><rect x="2.5" y="130.5" width="12" height="11.5" fill="#00007e"/><rect x="2.5" y="145.5" width="12" height="11.5" fill="#00007e"/><rect x="2.5" y="160.5" width="12" height="11.5" fill="#00007e"/><rect x="2.5" y="175.5" width="12" height="11.5" fill="#00007e"/><rect x="2.5" y="190.5" width="12" height="11.5" fill="#00007e"/><rect x="2.5" y="205.5" width="12" height="11.5" fill="#00007e"/><rect x="2.5" y="220.5" width="12" height="11.5" fill="#00007e"/><rect x="2.5" y="235.5" width="12" height="11.5" fill="#00007e"/><rect x="0.5" y="0.5" width="226" height="247" fill="none" stroke="#6a6a6a"/><rect x="1" y="246" width="225" height="1.5" fill="#fff"/><rect x="0" y="247" width="227" height="1" fill="#6a6a6a"/></svg>
<div style="position:absolute;left:519px;top:408px;width:227px;text-align:center;font-size:12px;font-weight:bold;line-height:12px;color:#111;">3</div>
<div style="position:absolute;left:479px;top:408px;width:37px;text-align:right;font-size:12px;line-height:12px;color:#111;">22</div>
<div style="position:absolute;left:519px;top:423px;width:227px;text-align:center;font-size:12px;font-weight:bold;line-height:12px;color:#111;">2</div>
<div style="position:absolute;left:479px;top:423px;width:37px;text-align:right;font-size:12px;line-height:12px;color:#111;">22</div>
<div style="position:absolute;left:519px;top:438px;width:227px;text-align:center;font-size:12px;font-weight:bold;line-height:12px;color:#111;">2</div>
<div style="position:absolute;left:479px;top:438px;width:37px;text-align:right;font-size:12px;line-height:12px;color:#111;">21</div>
<div style="position:absolute;left:519px;top:453px;width:227px;text-align:center;font-size:12px;font-weight:bold;line-height:12px;color:#111;">1</div>
<div style="position:absolute;left:479px;top:453px;width:37px;text-align:right;font-size:12px;line-height:12px;color:#111;">20</div>
<div style="position:absolute;left:519px;top:468px;width:227px;text-align:center;font-size:12px;font-weight:bold;line-height:12px;color:#111;">4</div>
<div style="position:absolute;left:479px;top:468px;width:37px;text-align:right;font-size:12px;line-height:12px;color:#111;">19</div>
<div style="position:absolute;left:519px;top:483px;width:227px;text-align:center;font-size:12px;font-weight:bold;line-height:12px;color:#111;">1</div>
<div style="position:absolute;left:479px;top:483px;width:37px;text-align:right;font-size:12px;line-height:12px;color:#111;">18</div>
<div style="position:absolute;left:519px;top:498px;width:227px;text-align:center;font-size:12px;font-weight:bold;line-height:12px;color:#111;">1</div>
<div style="position:absolute;left:479px;top:498px;width:37px;text-align:right;font-size:12px;line-height:12px;color:#111;">17</div>
<div style="position:absolute;left:519px;top:513px;width:227px;text-align:center;font-size:12px;font-weight:bold;line-height:12px;color:#111;">1</div>
<div style="position:absolute;left:479px;top:513px;width:37px;text-align:right;font-size:12px;line-height:12px;color:#111;">16</div>
<div style="position:absolute;left:519px;top:528px;width:227px;text-align:center;font-size:12px;font-weight:bold;line-height:12px;color:#111;">1</div>
<div style="position:absolute;left:479px;top:528px;width:37px;text-align:right;font-size:12px;line-height:12px;color:#111;">15</div>
<div style="position:absolute;left:519px;top:543px;width:227px;text-align:center;font-size:12px;font-weight:bold;line-height:12px;color:#111;">1</div>
<div style="position:absolute;left:479px;top:543px;width:37px;text-align:right;font-size:12px;line-height:12px;color:#111;">14</div>
<div style="position:absolute;left:519px;top:558px;width:227px;text-align:center;font-size:12px;font-weight:bold;line-height:12px;color:#111;">1</div>
<div style="position:absolute;left:479px;top:558px;width:37px;text-align:right;font-size:12px;line-height:12px;color:#111;">13</div>
<div style="position:absolute;left:519px;top:573px;width:227px;text-align:center;font-size:12px;font-weight:bold;line-height:12px;color:#111;">1</div>
<div style="position:absolute;left:479px;top:573px;width:37px;text-align:right;font-size:12px;line-height:12px;color:#111;">12</div>
<div style="position:absolute;left:519px;top:588px;width:227px;text-align:center;font-size:12px;font-weight:bold;line-height:12px;color:#111;">1</div>
<div style="position:absolute;left:479px;top:588px;width:37px;text-align:right;font-size:12px;line-height:12px;color:#111;">11</div>
<div style="position:absolute;left:519px;top:603px;width:227px;text-align:center;font-size:12px;font-weight:bold;line-height:12px;color:#111;">1</div>
<div style="position:absolute;left:479px;top:603px;width:37px;text-align:right;font-size:12px;line-height:12px;color:#111;">10</div>
<div style="position:absolute;left:519px;top:618px;width:227px;text-align:center;font-size:12px;font-weight:bold;line-height:12px;color:#111;">1</div>
<div style="position:absolute;left:479px;top:618px;width:37px;text-align:right;font-size:12px;line-height:12px;color:#111;">10</div>
<svg style="position:absolute;left:488px;top:409px" width="10" height="7" viewBox="0 0 10 7"><path d="M1 6 L5 2 L9 6" fill="none" stroke="#1a1ad8" stroke-width="2.2"/></svg>
<svg style="position:absolute;left:488px;top:619px" width="10" height="7" viewBox="0 0 10 7"><path d="M1 1 L5 5 L9 1" fill="none" stroke="#1a1ad8" stroke-width="2.2"/></svg>
<div style="position:absolute;left:779px;top:382px;width:227px;height:248px;background:#fff;border:1px solid #6a6a6a;"></div>
<div style="position:absolute;left:784px;top:388px;white-space:nowrap;font-size:12px;line-height:12px;color:#1c1c6a;">Ovaio Sx</div>
<svg style="position:absolute;left:779px;top:382px" width="227" height="248" viewBox="0 0 227 248"><defs><pattern id="cp779" x="2.50" y="25" width="14.72" height="15" patternUnits="userSpaceOnUse"><rect width="12.5" height="11.5" fill="#fffde4"/><rect y="11.5" width="12.5" height="3" fill="#edeadb"/></pattern></defs><rect x="2.50" y="25" width="218.60" height="225" fill="url(#cp779)"/><rect x="2.5" y="25.5" width="12" height="11.5" fill="#00007e"/><rect x="17.2" y="25.5" width="12" height="11.5" fill="#00007e"/><rect x="31.9" y="25.5" width="12" height="11.5" fill="#00007e"/><rect x="46.7" y="25.5" width="12" height="11.5" fill="#00007e"/><rect x="2.5" y="40.5" width="12" height="11.5" fill="#00007e"/><rect x="17.2" y="40.5" width="12" height="11.5" fill="#00007e"/><rect x="31.9" y="40.5" width="12" height="11.5" fill="#00007e"/><rect x="2.5" y="55.5" width="12" height="11.5" fill="#00007e"/><rect x="17.2" y="55.5" width="12" height="11.5" fill="#00007e"/><rect x="2.5" y="70.5" width="12" height="11.5" fill="#00007e"/><rect x="17.2" y="70.5" width="12" height="11.5" fill="#00007e"/><rect x="31.9" y="70.5" width="12" height="11.5" fill="#00007e"/><rect x="46.7" y="70.5" width="12" height="11.5" fill="#00007e"/><rect x="61.4" y="70.5" width="12" height="11.5" fill="#00007e"/><rect x="2.5" y="85.5" width="12" height="11.5" fill="#00007e"/><rect x="17.2" y="85.5" width="12" height="11.5" fill="#00007e"/><rect x="2.5" y="100.5" width="12" height="11.5" fill="#00007e"/><rect x="17.2" y="100.5" width="12" height="11.5" fill="#00007e"/><rect x="2.5" y="115.5" width="12" height="11.5" fill="#00007e"/><rect x="17.2" y="115.5" width="12" height="11.5" fill="#00007e"/><rect x="31.9" y="115.5" width="12" height="11.5" fill="#00007e"/><rect x="2.5" y="130.5" width="12" height="11.5" fill="#00007e"/><rect x="2.5" y="145.5" width="12" height="11.5" fill="#00007e"/><rect x="2.5" y="160.5" width="12" height="11.5" fill="#00007e"/><rect x="2.5" y="175.5" width="12" height="11.5" fill="#00007e"/><rect x="2.5" y="190.5" width="12" height="11.5" fill="#00007e"/><rect x="2.5" y="205.5" width="12" height="11.5" fill="#00007e"/><rect x="2.5" y="220.5" width="12" height="11.5" fill="#00007e"/><rect x="2.5" y="235.5" width="12" height="11.5" fill="#00007e"/><rect x="0.5" y="0.5" width="226" height="247" fill="none" stroke="#6a6a6a"/><rect x="1" y="246" width="225" height="1.5" fill="#fff"/><rect x="0" y="247" width="227" height="1" fill="#6a6a6a"/></svg>
<div style="position:absolute;left:779px;top:408px;width:227px;text-align:center;font-size:12px;font-weight:bold;line-height:12px;color:#111;">4</div>
<div style="position:absolute;left:739px;top:408px;width:37px;text-align:right;font-size:12px;line-height:12px;color:#111;">22</div>
<div style="position:absolute;left:779px;top:423px;width:227px;text-align:center;font-size:12px;font-weight:bold;line-height:12px;color:#111;">3</div>
<div style="position:absolute;left:739px;top:423px;width:37px;text-align:right;font-size:12px;line-height:12px;color:#111;">22</div>
<div style="position:absolute;left:779px;top:438px;width:227px;text-align:center;font-size:12px;font-weight:bold;line-height:12px;color:#111;">2</div>
<div style="position:absolute;left:739px;top:438px;width:37px;text-align:right;font-size:12px;line-height:12px;color:#111;">21</div>
<div style="position:absolute;left:779px;top:453px;width:227px;text-align:center;font-size:12px;font-weight:bold;line-height:12px;color:#111;">5</div>
<div style="position:absolute;left:739px;top:453px;width:37px;text-align:right;font-size:12px;line-height:12px;color:#111;">20</div>
<div style="position:absolute;left:779px;top:468px;width:227px;text-align:center;font-size:12px;font-weight:bold;line-height:12px;color:#111;">2</div>
<div style="position:absolute;left:739px;top:468px;width:37px;text-align:right;font-size:12px;line-height:12px;color:#111;">19</div>
<div style="position:absolute;left:779px;top:483px;width:227px;text-align:center;font-size:12px;font-weight:bold;line-height:12px;color:#111;">2</div>
<div style="position:absolute;left:739px;top:483px;width:37px;text-align:right;font-size:12px;line-height:12px;color:#111;">18</div>
<div style="position:absolute;left:779px;top:498px;width:227px;text-align:center;font-size:12px;font-weight:bold;line-height:12px;color:#111;">3</div>
<div style="position:absolute;left:739px;top:498px;width:37px;text-align:right;font-size:12px;line-height:12px;color:#111;">17</div>
<div style="position:absolute;left:779px;top:513px;width:227px;text-align:center;font-size:12px;font-weight:bold;line-height:12px;color:#111;">1</div>
<div style="position:absolute;left:739px;top:513px;width:37px;text-align:right;font-size:12px;line-height:12px;color:#111;">16</div>
<div style="position:absolute;left:779px;top:528px;width:227px;text-align:center;font-size:12px;font-weight:bold;line-height:12px;color:#111;">1</div>
<div style="position:absolute;left:739px;top:528px;width:37px;text-align:right;font-size:12px;line-height:12px;color:#111;">15</div>
<div style="position:absolute;left:779px;top:543px;width:227px;text-align:center;font-size:12px;font-weight:bold;line-height:12px;color:#111;">1</div>
<div style="position:absolute;left:739px;top:543px;width:37px;text-align:right;font-size:12px;line-height:12px;color:#111;">14</div>
<div style="position:absolute;left:779px;top:558px;width:227px;text-align:center;font-size:12px;font-weight:bold;line-height:12px;color:#111;">1</div>
<div style="position:absolute;left:739px;top:558px;width:37px;text-align:right;font-size:12px;line-height:12px;color:#111;">13</div>
<div style="position:absolute;left:779px;top:573px;width:227px;text-align:center;font-size:12px;font-weight:bold;line-height:12px;color:#111;">1</div>
<div style="position:absolute;left:739px;top:573px;width:37px;text-align:right;font-size:12px;line-height:12px;color:#111;">12</div>
<div style="position:absolute;left:779px;top:588px;width:227px;text-align:center;font-size:12px;font-weight:bold;line-height:12px;color:#111;">1</div>
<div style="position:absolute;left:739px;top:588px;width:37px;text-align:right;font-size:12px;line-height:12px;color:#111;">11</div>
<div style="position:absolute;left:779px;top:603px;width:227px;text-align:center;font-size:12px;font-weight:bold;line-height:12px;color:#111;">1</div>
<div style="position:absolute;left:739px;top:603px;width:37px;text-align:right;font-size:12px;line-height:12px;color:#111;">10</div>
<div style="position:absolute;left:779px;top:618px;width:227px;text-align:center;font-size:12px;font-weight:bold;line-height:12px;color:#111;">1</div>
<div style="position:absolute;left:739px;top:618px;width:37px;text-align:right;font-size:12px;line-height:12px;color:#111;">10</div>
<svg style="position:absolute;left:748px;top:409px" width="10" height="7" viewBox="0 0 10 7"><path d="M1 6 L5 2 L9 6" fill="none" stroke="#1a1ad8" stroke-width="2.2"/></svg>
<svg style="position:absolute;left:748px;top:619px" width="10" height="7" viewBox="0 0 10 7"><path d="M1 1 L5 5 L9 1" fill="none" stroke="#1a1ad8" stroke-width="2.2"/></svg>
<div style="position:absolute;left:612px;top:639px;white-space:nowrap;font-size:12px;font-weight:bold;line-height:12px;color:#111;"><div style="width:40px;text-align:center">22</div></div>
<div style="position:absolute;left:722px;top:636px;width:81px;height:21px;background:#fdf9c8;"></div>
<div style="position:absolute;left:742px;top:639px;white-space:nowrap;font-size:12px;font-weight:bold;line-height:12px;color:#111;"><div style="width:40px;text-align:center">51</div></div>
<div style="position:absolute;left:872px;top:639px;white-space:nowrap;font-size:12px;font-weight:bold;line-height:12px;color:#111;"><div style="width:40px;text-align:center">29</div></div>
<div style="position:absolute;left:649px;top:666px;white-space:nowrap;font-size:12px;line-height:12px;color:#1c1c6a;">EMT [mm]</div>
<div style="position:absolute;left:722px;top:662px;width:81px;height:22px;background:#fff;border:1px solid #dcdcdc;border-bottom:1px solid #9a9a9a;"></div>
<div style="position:absolute;left:740px;top:667px;white-space:nowrap;font-size:12px;font-weight:bold;line-height:12px;color:#111;"><div style="width:60px;text-align:right">25</div></div>
<div style="position:absolute;left:1014px;top:382px;width:408px;height:23px;background:linear-gradient(#eef3fc,#c6d8f2 55%,#a4c0ec);"></div>
<div style="position:absolute;left:1014px;top:404px;width:408px;height:2px;background:#10186a;"></div>
<div style="position:absolute;left:1019px;top:384px;width:118px;height:22px;background:linear-gradient(#fdecd0,#fbd59e);border:2px solid #10186a;border-bottom:none;"></div>
<div style="position:absolute;left:1019px;top:389px;white-space:nowrap;font-size:12px;font-weight:bold;line-height:12px;color:#111;"><div style="width:118px;text-align:center">Files</div></div>
<div style="position:absolute;left:1136px;top:389px;white-space:nowrap;font-size:12px;font-weight:bold;line-height:12px;color:#111;"><div style="width:118px;text-align:center">Note</div></div>
<div style="position:absolute;left:1014px;top:406px;width:409px;height:279px;background:#fff;border:1px solid #7a6a5a;border-top:1px solid #a08868;"></div>
<div style="position:absolute;left:1023px;top:416px;width:190px;height:178px;background:#efefef;"></div>
<div style="position:absolute;left:1222px;top:416px;width:192px;height:178px;background:#efefef;"></div>
<div style="position:absolute;left:1023px;top:418px;white-space:nowrap;font-size:11px;line-height:11px;color:#222;"><div style="width:190px;text-align:center">US_37_1600.jpg</div></div>
<div style="position:absolute;left:1222px;top:418px;white-space:nowrap;font-size:11px;line-height:11px;color:#222;"><div style="width:192px;text-align:center">US_20090625_1599.jpg</div></div>
<div style="position:absolute;left:1222px;top:580px;width:190px;height:15px;background:#c6def8;"></div>
<div style="position:absolute;left:1222px;top:582px;white-space:nowrap;font-size:11px;line-height:11px;color:#222;"><div style="width:190px;text-align:center">Anteprima immagine</div></div>
<svg style="position:absolute;left:1023px;top:450px" width="190" height="110" viewBox="0 0 190 110" preserveAspectRatio="none">
<defs>
<radialGradient id="ug1023" cx=".5" cy=".5" r=".5"><stop offset="0" stop-color="#585858"/><stop offset=".55" stop-color="#606060"/><stop offset=".8" stop-color="#3e3e3e"/><stop offset="1" stop-color="#000" stop-opacity="0"/></radialGradient>
<filter id="nz1023" x="0" y="0" width="100%" height="100%"><feTurbulence type="fractalNoise" baseFrequency="0.45" numOctaves="2" seed="7"/><feColorMatrix values="0 0 0 0 0.9  0 0 0 0 0.9  0 0 0 0 0.9  1.8 0 0 0 -0.8"/></filter><radialGradient id="mg1023" cx=".5" cy=".5" r=".5"><stop offset="0" stop-color="#fff"/><stop offset=".75" stop-color="#fff"/><stop offset="1" stop-color="#000"/></radialGradient><mask id="mk1023"><ellipse cx="50" cy="33" rx="42" ry="27" fill="url(#mg1023)"/><ellipse cx="145" cy="35" rx="30" ry="26" fill="url(#mg1023)"/><ellipse cx="52" cy="85" rx="42" ry="30" fill="url(#mg1023)"/></mask>
</defs>
<rect width="190" height="110" fill="#030303"/>
<rect width="190" height="7.5" fill="#1c1c1c"/><path d="M22 2.5h30M70 2.5h25M20 5.5h80M120 5.5h40M165 5.5h22" stroke="#5a5a5a" stroke-width="1"/>
<rect x="2" y="12" width="2.5" height="50" fill="#bbb"/>
<ellipse cx="50" cy="33" rx="42" ry="27" fill="url(#ug1023)"/>
<ellipse cx="145" cy="35" rx="30" ry="26" fill="url(#ug1023)"/>
<ellipse cx="52" cy="85" rx="42" ry="30" fill="url(#ug1023)"/>
<rect width="190" height="110" filter="url(#nz1023)" mask="url(#mk1023)" opacity=".45"/>
<ellipse cx="50" cy="33" rx="36" ry="22" fill="none" stroke="#a8a8a8" stroke-width="1.5" opacity=".35"/>
<g stroke="#9a9a9a" stroke-width="0.9">
<ellipse cx="27" cy="37" rx="10" ry="12" fill="#060606"/><ellipse cx="40" cy="26" rx="6" ry="9" fill="#0a0808"/>
<ellipse cx="51" cy="28" rx="5" ry="10" fill="#100c06" stroke="#a89060"/><ellipse cx="62" cy="27" rx="5" ry="9" fill="#081008" stroke="#507a50"/>
<ellipse cx="55" cy="46" rx="7" ry="7" fill="#1a0408" stroke="#a03050"/><ellipse cx="72" cy="36" rx="8" ry="9" fill="#0a0a0a" stroke="#666"/>
</g>
<ellipse cx="66" cy="46" rx="3" ry="4" fill="#b030b0"/>

<g stroke="#9a9a9a" stroke-width="0.9">
<ellipse cx="144" cy="25" rx="8" ry="7" fill="#0a0a06" stroke="#8a8050"/><ellipse cx="132" cy="42" rx="7" ry="9" fill="#060606" stroke="#8a8050"/>
<ellipse cx="150" cy="45" rx="6" ry="7" fill="#200810" stroke="#804050"/><ellipse cx="159" cy="40" rx="5" ry="6" fill="#08102a" stroke="#405080"/>
</g>
<ellipse cx="141" cy="49" rx="2.5" ry="2.5" fill="#1a2040"/>

<g stroke="#a0a0a0" stroke-width="1">
<ellipse cx="31" cy="79" rx="10" ry="9" fill="#050505"/><ellipse cx="29" cy="94" rx="10" ry="7" fill="#050505"/>
<ellipse cx="47" cy="76" rx="6" ry="6" fill="#0a0e30" stroke="#303a80"/><ellipse cx="72" cy="82" rx="9" ry="10" fill="#140c0a" stroke="#806060"/>
<ellipse cx="40" cy="100" rx="5" ry="5" fill="#060a0a" stroke="#509090"/><ellipse cx="52" cy="103" rx="4" ry="4" fill="#0a0a04" stroke="#909050"/>
</g>
<path d="M133 71 L141 69 L144 77 L138 83 L131 79Z" fill="#e828e8"/>
<path d="M145 70 Q152 64 158 70 L156 79 L148 80Z" fill="#f0e810"/>
<path d="M156 76 L166 75 L168 82 L162 88 L155 84Z" fill="#38e0e8"/>
<path d="M141 82 L150 80 L153 86 L147 88Z" fill="#e82020"/>
<path d="M143 86 L152 84 L154 92 L150 101 L144 96Z" fill="#f08018"/>
<path d="M121 92 L133 88 L133 100 L125 100Z" fill="#e05018"/>
<path d="M131 91 L139 87 L141 101 L133 104Z" fill="#30a060"/>
<path d="M153 87 L162 87 L161 101 L154 101Z" fill="#f090c0"/>
<path d="M148 99 L155 100 L154 105 L149 104Z" fill="#2040e0"/>
<path d="M172 14h10M172 17h12M172 20h12M172 23h14M172 36h10M172 39h12M172 42h10M172 45h12M172 48h10M172 51h10" stroke="#9a9a9a" stroke-width="1"/>
<path d="M172 27h12M172 30h12M172 33h10" stroke="#3a3ac0" stroke-width="1"/>
<path d="M160 108h28" stroke="#b8b830" stroke-width="1.6"/><path d="M78 68h15" stroke="#b8b830" stroke-width="1.2"/>
<path d="M92 38h6M92 90h6" stroke="#a03030" stroke-width="1"/>
</svg>
<svg style="position:absolute;left:1222px;top:450px" width="191" height="110" viewBox="0 0 190 110" preserveAspectRatio="none">
<defs>
<radialGradient id="ug1222" cx=".5" cy=".5" r=".5"><stop offset="0" stop-color="#585858"/><stop offset=".55" stop-color="#606060"/><stop offset=".8" stop-color="#3e3e3e"/><stop offset="1" stop-color="#000" stop-opacity="0"/></radialGradient>
<filter id="nz1222" x="0" y="0" width="100%" height="100%"><feTurbulence type="fractalNoise" baseFrequency="0.45" numOctaves="2" seed="7"/><feColorMatrix values="0 0 0 0 0.9  0 0 0 0 0.9  0 0 0 0 0.9  1.8 0 0 0 -0.8"/></filter><radialGradient id="mg1222" cx=".5" cy=".5" r=".5"><stop offset="0" stop-color="#fff"/><stop offset=".75" stop-color="#fff"/><stop offset="1" stop-color="#000"/></radialGradient><mask id="mk1222"><ellipse cx="50" cy="33" rx="42" ry="27" fill="url(#mg1222)"/><ellipse cx="145" cy="35" rx="30" ry="26" fill="url(#mg1222)"/><ellipse cx="52" cy="85" rx="42" ry="30" fill="url(#mg1222)"/></mask>
</defs>
<rect width="190" height="110" fill="#030303"/>
<rect width="190" height="7.5" fill="#1c1c1c"/><path d="M22 2.5h30M70 2.5h25M20 5.5h80M120 5.5h40M165 5.5h22" stroke="#5a5a5a" stroke-width="1"/>
<rect x="2" y="12" width="2.5" height="50" fill="#bbb"/>
<ellipse cx="50" cy="33" rx="42" ry="27" fill="url(#ug1222)"/>
<ellipse cx="145" cy="35" rx="30" ry="26" fill="url(#ug1222)"/>
<ellipse cx="52" cy="85" rx="42" ry="30" fill="url(#ug1222)"/>
<rect width="190" height="110" filter="url(#nz1222)" mask="url(#mk1222)" opacity=".45"/>
<ellipse cx="50" cy="33" rx="36" ry="22" fill="none" stroke="#a8a8a8" stroke-width="1.5" opacity=".35"/>
<g stroke="#9a9a9a" stroke-width="0.9">
<ellipse cx="27" cy="37" rx="10" ry="12" fill="#060606"/><ellipse cx="40" cy="26" rx="6" ry="9" fill="#0a0808"/>
<ellipse cx="51" cy="28" rx="5" ry="10" fill="#100c06" stroke="#a89060"/><ellipse cx="62" cy="27" rx="5" ry="9" fill="#081008" stroke="#507a50"/>
<ellipse cx="55" cy="46" rx="7" ry="7" fill="#1a0408" stroke="#a03050"/><ellipse cx="72" cy="36" rx="8" ry="9" fill="#0a0a0a" stroke="#666"/>
</g>
<ellipse cx="66" cy="46" rx="3" ry="4" fill="#b030b0"/>

<g stroke="#9a9a9a" stroke-width="0.9">
<ellipse cx="144" cy="25" rx="8" ry="7" fill="#0a0a06" stroke="#8a8050"/><ellipse cx="132" cy="42" rx="7" ry="9" fill="#060606" stroke="#8a8050"/>
<ellipse cx="150" cy="45" rx="6" ry="7" fill="#200810" stroke="#804050"/><ellipse cx="159" cy="40" rx="5" ry="6" fill="#08102a" stroke="#405080"/>
</g>
<ellipse cx="141" cy="49" rx="2.5" ry="2.5" fill="#1a2040"/>

<g stroke="#a0a0a0" stroke-width="1">
<ellipse cx="31" cy="79" rx="10" ry="9" fill="#050505"/><ellipse cx="29" cy="94" rx="10" ry="7" fill="#050505"/>
<ellipse cx="47" cy="76" rx="6" ry="6" fill="#0a0e30" stroke="#303a80"/><ellipse cx="72" cy="82" rx="9" ry="10" fill="#140c0a" stroke="#806060"/>
<ellipse cx="40" cy="100" rx="5" ry="5" fill="#060a0a" stroke="#509090"/><ellipse cx="52" cy="103" rx="4" ry="4" fill="#0a0a04" stroke="#909050"/>
</g>
<path d="M133 71 L141 69 L144 77 L138 83 L131 79Z" fill="#e828e8"/>
<path d="M145 70 Q152 64 158 70 L156 79 L148 80Z" fill="#f0e810"/>
<path d="M156 76 L166 75 L168 82 L162 88 L155 84Z" fill="#38e0e8"/>
<path d="M141 82 L150 80 L153 86 L147 88Z" fill="#e82020"/>
<path d="M143 86 L152 84 L154 92 L150 101 L144 96Z" fill="#f08018"/>
<path d="M121 92 L133 88 L133 100 L125 100Z" fill="#e05018"/>
<path d="M131 91 L139 87 L141 101 L133 104Z" fill="#30a060"/>
<path d="M153 87 L162 87 L161 101 L154 101Z" fill="#f090c0"/>
<path d="M148 99 L155 100 L154 105 L149 104Z" fill="#2040e0"/>
<path d="M172 14h10M172 17h12M172 20h12M172 23h14M172 36h10M172 39h12M172 42h10M172 45h12M172 48h10M172 51h10" stroke="#9a9a9a" stroke-width="1"/>
<path d="M172 27h12M172 30h12M172 33h10" stroke="#3a3ac0" stroke-width="1"/>
<path d="M160 108h28" stroke="#b8b830" stroke-width="1.6"/><path d="M78 68h15" stroke="#b8b830" stroke-width="1.2"/>
<path d="M92 38h6M92 90h6" stroke="#a03030" stroke-width="1"/>
</svg>
<div style="position:absolute;left:1023px;top:653px;width:125px;height:23px;background:linear-gradient(#ffffff,#f6f6f6);border:1px solid #c4c4c4;border-radius:3px;"></div>
<div style="position:absolute;left:1023px;top:658px;width:125px;text-align:center;font-size:12px;line-height:13px;color:#111;white-space:nowrap;"><svg style="vertical-align:-2px;margin-right:4px" width="16" height="13" viewBox="0 0 16 13"><rect x="0.5" y="2.5" width="15" height="10" rx="1" fill="#4a5a78" stroke="#222"/><rect x="4" y="0.5" width="6" height="3" fill="#333"/><circle cx="8" cy="7.5" r="3.2" fill="#111" stroke="#ccc"/></svg>Aggiungi file</div>
<div style="position:absolute;left:1156px;top:653px;width:124px;height:23px;background:linear-gradient(#ffffff,#f6f6f6);border:1px solid #c4c4c4;border-radius:3px;"></div>
<div style="position:absolute;left:1156px;top:658px;width:124px;text-align:center;font-size:12px;line-height:13px;color:#111;white-space:nowrap;">Imp. come anteprima</div>
<div style="position:absolute;left:1289px;top:653px;width:124px;height:23px;background:linear-gradient(#ffffff,#f6f6f6);border:1px solid #c4c4c4;border-radius:3px;"></div>
<div style="position:absolute;left:1289px;top:658px;width:124px;text-align:center;font-size:12px;line-height:13px;color:#111;white-space:nowrap;">Esporta immagine</div>
<div style="position:absolute;left:1229px;top:693px;width:92px;height:24px;background:linear-gradient(#ffffff,#f6f6f6);border:1px solid #c4c4c4;border-radius:3px;"></div>
<div style="position:absolute;left:1229px;top:698px;width:92px;text-align:center;font-size:12px;line-height:13px;color:#111;white-space:nowrap;"><svg style="vertical-align:-3px;margin-right:6px" width="14" height="15" viewBox="0 0 14 15"><path d="M1.5 1.5 L12.5 13.5 M12.5 1.5 L1.5 13.5" stroke="#c8102e" stroke-width="2.8"/></svg>Annulla</div>
<div style="position:absolute;left:1330px;top:693px;width:92px;height:24px;background:linear-gradient(#ffffff,#f6f6f6);border:1px solid #c4c4c4;border-radius:3px;"></div>
<div style="position:absolute;left:1330px;top:698px;width:92px;text-align:center;font-size:12px;line-height:13px;color:#111;white-space:nowrap;"><svg style="vertical-align:-3px;margin-right:6px" width="17" height="14" viewBox="0 0 17 14"><path d="M1 7 L6 12 L16 1" fill="none" stroke="#20a020" stroke-width="3.2"/></svg>OK</div>
<div style="position:absolute;left:0px;top:263px;width:2px;height:700px;background:#b4b4b4;"></div>
</body></html>
